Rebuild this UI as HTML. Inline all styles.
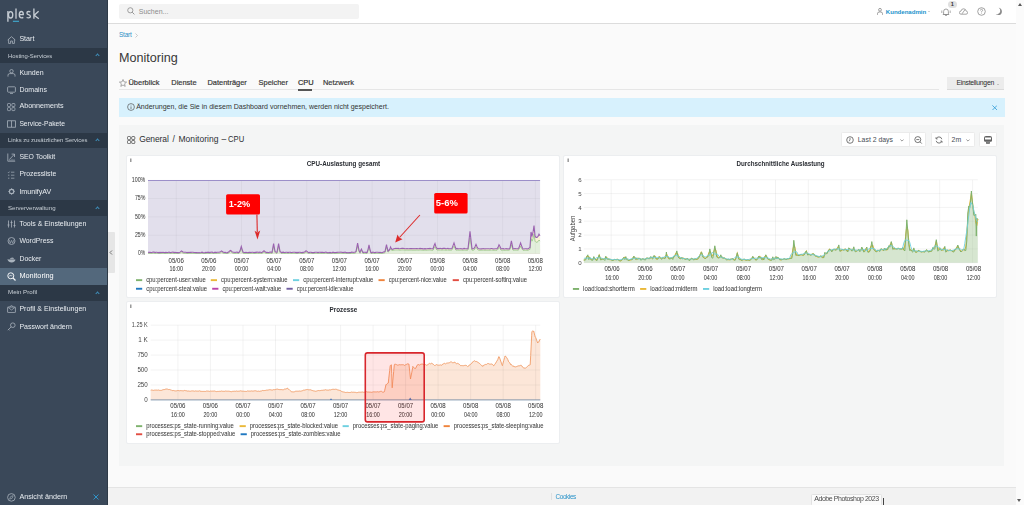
<!DOCTYPE html>
<html><head><meta charset="utf-8">
<style>
*{box-sizing:border-box;margin:0;padding:0}
html,body{width:1024px;height:505px;overflow:hidden;background:#fafafa;font-family:"Liberation Sans",sans-serif;position:relative}
.a{position:absolute;white-space:nowrap}
#sb{position:absolute;left:0;top:0;width:108px;height:505px;background:#3a4859;will-change:transform}
#sb .t{position:absolute;left:19.4px;color:#e9edf1;font-size:7.05px;line-height:8px;margin-top:0.6px}
#sb .band{position:absolute;left:0;width:107px;background:#2c3846}
#sb .band span{position:absolute;left:8px;top:4px;color:#c9d0d7;font-size:6.2px;line-height:8px}
#sb .band i{position:absolute;left:96.3px;top:6px;width:3px;height:3px;border-left:1px solid #3f8fbc;border-top:1px solid #3f8fbc;transform:rotate(45deg)}
#sb svg{position:absolute;left:7px}
#hdr{position:absolute;left:108px;top:0;width:908px;height:24px;background:#fff;border-bottom:1px solid #dcdcdc}
#scr{position:absolute;left:1016px;top:0;width:8px;height:505px;background:#fbfbfb}
.pnl{background:#fff;border:1px solid #eceef0;border-radius:2px}
.tab{position:absolute;top:79px;font-size:7.45px;line-height:8px;color:#3a3a3a;-webkit-text-stroke:0.2px #3a3a3a}
</style></head><body>

<div id="sb">
  <!-- logo -->
  <svg style="left:0;top:0" width="44" height="26" viewBox="0 0 44 26"><g fill="none" stroke="#c5ccd3" stroke-width="1.35">
   <path d="M7.9 11 V21.8"/><ellipse cx="10.6" cy="14.75" rx="2.15" ry="3.2"/>
   <path d="M16 8.6 V18.7"/>
   <path d="M19.4 14.6 H23.3 Q23.3 11.5 21.3 11.5 Q19.3 11.5 19.3 14.75 Q19.3 17.9 21.5 17.9 Q22.6 17.9 23.3 17.4"/>
   <path d="M30.3 11.8 Q29.6 11.5 28.6 11.5 Q26.9 11.5 26.9 12.9 Q26.9 14.1 28.6 14.7 Q30.4 15.3 30.4 16.5 Q30.4 17.9 28.5 17.9 Q27.4 17.9 26.6 17.5"/>
   <path d="M33.9 8.6 V18.7 M38.6 11.2 L34.2 15.2 L38.8 18.7"/>
  </g><rect x="12.9" y="20.7" width="6.1" height="1.3" fill="#3f9dc0"/></svg>
  <svg style="top:36px" width="9" height="8" viewBox="0 0 9 8"><path d="M0.7 4 L4.5 0.7 L8.3 4 M1.6 3.3 V7.4 H3.6 V5 H5.4 V7.4 H7.4 V3.3" fill="none" stroke="#a9b3bd" stroke-width="0.8"/></svg>
  <div class="t" style="top:34.8px;font-size:7.1px">Start</div>

  <div class="band" style="top:48px;height:14.7px"><span style="font-size:5.86px;top:3.8px">Hosting-Services</span><i style="top:6.1px"></i></div>

  <svg style="top:68.5px" width="9" height="8" viewBox="0 0 9 8"><circle cx="4.5" cy="2.2" r="1.7" fill="none" stroke="#a9b3bd" stroke-width="0.8"/><path d="M1 7.6 V6.2 Q1 4.6 2.8 4.6 H6.2 Q8 4.6 8 6.2 V7.6" fill="none" stroke="#a9b3bd" stroke-width="0.8"/></svg>
  <div class="t" style="top:68.1px;font-size:7.02px">Kunden</div>

  <svg style="top:85.5px" width="9" height="8" viewBox="0 0 9 8"><rect x="0.6" y="0.8" width="7.8" height="5.4" rx="0.8" fill="none" stroke="#a9b3bd" stroke-width="0.8"/><path d="M3 7.4 H6" stroke="#a9b3bd" stroke-width="0.8"/></svg>
  <div class="t" style="top:85.1px;font-size:6.99px">Domains</div>

  <svg style="top:102.6px" width="9" height="9" viewBox="0 0 9 9"><g fill="none" stroke="#a9b3bd" stroke-width="0.75"><rect x="0.5" y="0.5" width="3" height="3" rx="0.7"/><rect x="4.9" y="0.5" width="3" height="3" rx="0.7"/><rect x="0.5" y="4.6" width="3" height="3" rx="0.7"/><rect x="4.9" y="4.6" width="3" height="3" rx="0.7"/></g></svg>
  <div class="t" style="top:101.6px;font-size:7.16px">Abonnements</div>

  <svg style="top:120px" width="9" height="8" viewBox="0 0 9 8"><rect x="0.6" y="0.8" width="7.8" height="6.4" fill="none" stroke="#a9b3bd" stroke-width="0.8"/><path d="M4.5 0.8 V7.2" stroke="#a9b3bd" stroke-width="0.8"/></svg>
  <div class="t" style="top:119.9px;font-size:6.72px">Service-Pakete</div>

  <div class="band" style="top:133px;height:14.6px"><span style="font-size:5.86px;top:3.4px">Links zu zusätzlichen Services</span><i style="top:6.1px"></i></div>

  <svg style="top:152.5px" width="9" height="9" viewBox="0 0 9 9"><g fill="none" stroke="#a9b3bd" stroke-width="0.8"><path d="M0.8 0.5 V8.2 H8.2 M2.3 6.6 L7.4 1.2 M4.6 1.1 H7.5 V4"/><path d="M3 8 V6.6 M5 8 V5.8 M7 8 V6.2" stroke-width="0.6"/></g></svg>
  <div class="t" style="top:152.8px;font-size:6.86px">SEO Toolkit</div>

  <svg style="top:170.5px" width="9" height="9" viewBox="0 0 9 9"><g fill="none" stroke="#a9b3bd" stroke-width="0.7"><path d="M1 1.2 L1.6 1.8 L2.6 0.6 M4 1.2 H7.4 M1 4.2 H2.4 M4 4.2 H7.4 M1 7.2 H2.4 M4 7.2 H7.4"/></g></svg>
  <div class="t" style="top:169.8px;font-size:6.83px">Prozessliste</div>

  <svg style="top:188px" width="9" height="8" viewBox="0 0 9 8"><circle cx="4.6" cy="3.5" r="2.2" fill="none" stroke="#a9b3bd" stroke-width="1.2"/><g stroke="#a9b3bd" stroke-width="0.9"><path d="M4.6 0.3 V1 M4.6 6 V6.7 M1.4 3.5 H2.1 M7.1 3.5 H7.8 M2.3 1.2 L2.8 1.7 M6.4 5.3 L6.9 5.8 M6.9 1.2 L6.4 1.7 M2.8 5.3 L2.3 5.8"/></g></svg>
  <div class="t" style="top:187.3px;font-size:7.11px">ImunifyAV</div>

  <div class="band" style="top:199.7px;height:16.1px"><span style="font-size:6.12px;top:4.4px">Serververwaltung</span><i style="top:6.9px"></i></div>

  <svg style="top:220px" width="9" height="8" viewBox="0 0 9 8"><path d="M1.5 0.5 V7.5 M4.5 0.5 V7.5 M7.5 0.5 V7.5 M0.5 5 H2.5 M3.5 2.5 H5.5 M6.5 5.5 H8.5" fill="none" stroke="#a9b3bd" stroke-width="0.8"/></svg>
  <div class="t" style="top:219.6px;font-size:7.0px">Tools &amp; Einstellungen</div>

  <svg style="top:237px" width="9" height="8" viewBox="0 0 9 8"><circle cx="4.5" cy="4" r="3.5" fill="none" stroke="#a9b3bd" stroke-width="0.8"/><path d="M2 2.5 L3.3 6.2 L4.5 3.3 L5.7 6.2 L7 2.5" fill="none" stroke="#a9b3bd" stroke-width="0.6"/></svg>
  <div class="t" style="top:236.4px;font-size:6.92px">WordPress</div>

  <svg style="top:255.5px" width="9" height="7" viewBox="0 0 9 7"><path d="M0.4 3.4 Q1.2 3.1 1.6 3.6 H8.4 Q8.2 6.4 4.6 6.4 Q1.6 6.4 0.4 3.4 Z" fill="#a9b3bd"/><path d="M2.6 3.2 H7.2 L6.4 1.8 Q5 1.2 3.6 2 Z" fill="#a9b3bd" opacity="0.85"/></svg>
  <div class="t" style="top:254.4px;font-size:6.91px">Docker</div>

  <div class="a" style="left:0;top:267.5px;width:107px;height:17.3px;background:#53687c"></div>
  <svg style="top:272px" width="9" height="9" viewBox="0 0 9 9"><circle cx="3.8" cy="3.8" r="3" fill="none" stroke="#f3f5f7" stroke-width="1"/><path d="M6 6 L8.5 8.5" stroke="#f3f5f7" stroke-width="1.2"/><path d="M2.3 4.5 L3.2 3 L4.3 4.2 L5.3 2.8" fill="none" stroke="#f3f5f7" stroke-width="0.6"/></svg>
  <div class="t" style="top:271.4px;font-size:7.35px;color:#fff">Monitoring</div>

  <div class="band" style="top:284.8px;height:15.9px"><span style="font-size:6.18px;top:3.7px">Mein Profil</span><i style="top:6.8px"></i></div>

  <svg style="top:305px" width="9" height="8" viewBox="0 0 9 8"><rect x="0.6" y="2" width="7.8" height="5.6" rx="0.6" fill="none" stroke="#a9b3bd" stroke-width="0.8"/><path d="M0.8 2.2 L4.5 5 L8.2 2.2 M2.5 2 L4.5 0.5 L6.5 2" fill="none" stroke="#a9b3bd" stroke-width="0.7"/></svg>
  <div class="t" style="top:304.7px;font-size:7.04px">Profil &amp; Einstellungen</div>

  <svg style="top:322px" width="9" height="9" viewBox="0 0 9 9"><circle cx="5.8" cy="3.2" r="2.3" fill="none" stroke="#a9b3bd" stroke-width="0.8"/><path d="M4.2 4.8 L0.8 8.2 M1.6 7.4 L2.6 8.4" fill="none" stroke="#a9b3bd" stroke-width="0.8"/></svg>
  <div class="t" style="top:322.0px;font-size:7.0px">Passwort ändern</div>

  <svg style="top:492.5px" width="9" height="9" viewBox="0 0 9 9"><circle cx="4.4" cy="4.4" r="3.8" fill="none" stroke="#a9b3bd" stroke-width="0.8"/><path d="M6.2 2.6 L3.6 3.6 L2.6 6.2 L5.2 5.2 Z" fill="none" stroke="#a9b3bd" stroke-width="0.6"/></svg>
  <div class="t" style="top:492.1px;font-size:7.19px">Ansicht ändern</div>
  <svg style="left:93px;top:493.5px;position:absolute" width="6" height="6" viewBox="0 0 6 6"><path d="M0.5 0.5 L5.5 5.5 M5.5 0.5 L0.5 5.5" stroke="#2f9bd4" stroke-width="0.9"/></svg>
  <div class="a" style="left:107px;top:0;width:1px;height:505px;background:#2e3a47"></div>
</div>

<div id="hdr">
  <div class="a" style="left:11px;top:4px;width:240px;height:15px;background:#f3f3f3;border-radius:2px"></div>
  <svg class="a" style="left:19px;top:7px" width="8" height="8" viewBox="0 0 8 8"><circle cx="3.3" cy="3.3" r="2.6" fill="none" stroke="#8a8a8a" stroke-width="0.8"/><path d="M5.2 5.2 L7.4 7.4" stroke="#8a8a8a" stroke-width="0.9"/></svg>
  <div class="a" style="left:30.8px;top:7.9px;font-size:7px;line-height:8px;color:#8c8c8c">Suchen...</div>

  <svg class="a" style="left:769px;top:8px" width="6" height="7" viewBox="0 0 6 7"><circle cx="3" cy="1.8" r="1.4" fill="none" stroke="#777" stroke-width="0.7"/><path d="M0.5 6.8 V5.6 Q0.5 4 2.2 4 H3.8 Q5.5 4 5.5 5.6 V6.8" fill="none" stroke="#777" stroke-width="0.7"/></svg>
  <div class="a" style="left:777.8px;top:7.6px;font-size:6.1px;line-height:8px;color:#2293cc;font-weight:bold;letter-spacing:-0.02px">Kundenadmin</div>
  <div class="a" style="left:819.8px;top:11px;width:0;height:0;border-left:1.4px solid transparent;border-right:1.4px solid transparent;border-top:1.4px solid #a8a8a8"></div>

  <svg class="a" style="left:833px;top:7.5px" width="10" height="8" viewBox="0 0 10 8"><path d="M2.6 6.5 V3.6 Q2.6 1 5 1 Q7.4 1 7.4 3.6 V6.5 Z M1.8 6.5 H8.2 M4 7.4 H6" fill="none" stroke="#8a8a8a" stroke-width="0.8"/><path d="M0.8 2.5 V5 M9.2 2.5 V5" stroke="#8a8a8a" stroke-width="0.7"/></svg>
  <div class="a" style="left:840px;top:1px;width:8.8px;height:7.2px;border-radius:3.6px;background:#e0e0e0;font-size:5.6px;line-height:7.2px;text-align:center;color:#333;font-weight:bold">1</div>
  <svg class="a" style="left:851px;top:8px" width="9" height="7" viewBox="0 0 9 7"><path d="M2 6.2 Q0.4 6.2 0.4 4.6 Q0.4 3.1 2 3.1 Q2.3 0.8 4.6 0.8 Q6.7 0.8 7.1 3 Q8.6 3.2 8.6 4.7 Q8.6 6.2 7 6.2 Z M3 5.8 L6 1.6" fill="none" stroke="#8a8a8a" stroke-width="0.75"/></svg>
  <svg class="a" style="left:868.5px;top:7.2px" width="9" height="9" viewBox="0 0 9 9"><circle cx="4.5" cy="4.5" r="3.8" fill="none" stroke="#8a8a8a" stroke-width="0.8"/><path d="M3.4 3.5 Q3.4 2.3 4.5 2.3 Q5.6 2.3 5.6 3.4 Q5.6 4.2 4.5 4.6 V5.4" fill="none" stroke="#8a8a8a" stroke-width="0.7"/><circle cx="4.5" cy="6.6" r="0.45" fill="#8a8a8a"/></svg>
  <svg class="a" style="left:886.5px;top:7.2px" width="8" height="9" viewBox="0 0 8 9"><path d="M3.6 0.4 Q6.9 1.6 6.9 4.4 Q6.9 8 3.2 8 Q1.6 8 0.6 7.2 Q4.4 7.4 5.2 4.4 Q5.7 2 3.6 0.4 Z" fill="#8a8a8a"/></svg>
</div>

<!-- main content -->
<div class="a" style="left:119px;top:31.6px;font-size:6.4px;line-height:6.4px;color:#2a90c6;letter-spacing:-0.18px">Start</div>
<svg class="a" style="left:135px;top:32.5px" width="3" height="5" viewBox="0 0 3 5"><path d="M0.5 0.5 L2.5 2.5 L0.5 4.5" fill="none" stroke="#aaa" stroke-width="0.6"/></svg>
<div class="a" style="left:119px;top:50.5px;font-size:12.6px;line-height:14px;color:#383838">Monitoring</div>

<svg class="a" style="left:119px;top:79px" width="8" height="8" viewBox="0 0 8 8"><path d="M4 0.5 L5 2.9 L7.6 3.1 L5.6 4.8 L6.2 7.4 L4 6 L1.8 7.4 L2.4 4.8 L0.4 3.1 L3 2.9 Z" fill="none" stroke="#6a6a6a" stroke-width="0.55"/></svg>
<div class="tab" style="left:128.5px">Überblick</div>
<div class="tab" style="left:171.3px">Dienste</div>
<div class="tab" style="left:207.5px">Datenträger</div>
<div class="tab" style="left:258.6px">Speicher</div>
<div class="tab" style="left:298px;color:#222">CPU</div>
<div class="tab" style="left:323px">Netzwerk</div>
<div class="a" style="left:119px;top:89px;width:820px;height:1px;background:#e6e6e6"></div>
<div class="a" style="left:298px;top:89px;width:13.5px;height:1.6px;background:#555"></div>

<div class="a" style="left:947px;top:77px;width:57.3px;height:12.2px;background:#ececec;box-shadow:0 0.8px 0.3px #d0d0d0"></div>
<div class="a" style="left:956.5px;top:78.6px;font-size:6.8px;line-height:7px;color:#2b2b2b;letter-spacing:-0.26px">Einstellungen</div>
<div class="a" style="left:996.6px;top:83.5px;width:0;height:0;border-left:1.2px solid transparent;border-right:1.2px solid transparent;border-top:1.3px solid #999"></div>

<div class="a" style="left:119px;top:97.5px;width:885.5px;height:19.3px;background:#d7f1fd"></div>
<svg class="a" style="left:126.8px;top:103px" width="8" height="8" viewBox="0 0 8 8"><circle cx="4" cy="4" r="3.4" fill="none" stroke="#555" stroke-width="0.7"/><path d="M4 3.4 V6" stroke="#555" stroke-width="0.7"/><circle cx="4" cy="2.2" r="0.4" fill="#555"/></svg>
<div class="a" style="left:136.2px;top:102.5px;font-size:7.03px;line-height:8px;color:#333">Änderungen, die Sie in diesem Dashboard vornehmen, werden nicht gespeichert.</div>
<svg class="a" style="left:991.8px;top:104.8px" width="5.5" height="5.5" viewBox="0 0 5.5 5.5"><path d="M0.4 0.4 L5.1 5.1 M5.1 0.4 L0.4 5.1" stroke="#2d9bd6" stroke-width="0.8"/></svg>

<!-- handle -->
<div class="a" style="left:108px;top:231.5px;width:7px;height:41.5px;background:#e6e6e6;border-radius:0 1px 1px 0"></div>
<svg class="a" style="left:108.8px;top:250px" width="4" height="5" viewBox="0 0 4 5"><path d="M3 0.5 L1 2.5 L3 4.5" fill="none" stroke="#666" stroke-width="0.9"/></svg>

<!-- grafana -->
<div class="a" id="gf" style="left:119px;top:125px;width:885px;height:340.5px;background:#f4f5f5"></div>
<svg class="a" style="left:127px;top:136px" width="8.5" height="8" viewBox="0 0 8.5 8"><g fill="none" stroke="#505050" stroke-width="0.85"><rect x="0.5" y="0.5" width="3.1" height="3.1" rx="0.9"/><rect x="4.7" y="0.5" width="3.1" height="3.1" rx="0.9"/><rect x="0.5" y="4.5" width="3.1" height="3.1" rx="0.9"/><rect x="4.7" y="4.5" width="3.1" height="3.1" rx="0.9"/></g></svg>
<div class="a" style="left:139.2px;top:134.5px;font-size:8.5px;line-height:9px;color:#2d2f33;letter-spacing:-0.1px">General</div>
<div class="a" style="left:172.5px;top:134.5px;font-size:8.5px;line-height:9px;color:#2d2f33">/</div>
<div class="a" style="left:178.5px;top:134.5px;font-size:8.5px;line-height:9px;color:#2d2f33;letter-spacing:0.03px">Monitoring</div>
<div class="a" style="left:221.6px;top:134.5px;font-size:8.5px;line-height:9px;color:#2d2f33">–</div>
<div class="a" style="left:228.3px;top:134.5px;font-size:8.5px;line-height:9px;color:#2d2f33;transform:scaleX(0.9);transform-origin:0 0">CPU</div>

<div class="a" style="left:841.4px;top:132.2px;width:84.8px;height:15px;background:#fff;border:1px solid #ebebeb;border-radius:1.5px"></div>
<div class="a" style="left:909px;top:132.2px;width:1px;height:15px;background:#ebebeb"></div>
<svg class="a" style="left:845.6px;top:136px" width="8" height="8" viewBox="0 0 8 8"><circle cx="4" cy="4" r="3.3" fill="none" stroke="#555" stroke-width="0.8"/><path d="M4 1.9 V4.2 L2.8 5.2" fill="none" stroke="#555" stroke-width="0.7"/></svg>
<div class="a" style="left:857.8px;top:135.8px;font-size:6.88px;line-height:8px;color:#464c54">Last 2 days</div>
<svg class="a" style="left:900px;top:139px" width="4" height="3" viewBox="0 0 4 3"><path d="M0.4 0.5 L2 2.1 L3.6 0.5" fill="none" stroke="#555" stroke-width="0.6"/></svg>
<svg class="a" style="left:913.8px;top:136px" width="9" height="8" viewBox="0 0 9 8"><circle cx="3.8" cy="3.6" r="3" fill="none" stroke="#555" stroke-width="0.8"/><path d="M2.3 3.6 H5.3 M6 5.8 L7.8 7.6" stroke="#555" stroke-width="0.8"/></svg>

<div class="a" style="left:930.8px;top:132.2px;width:44.6px;height:15px;background:#fff;border:1px solid #ebebeb;border-radius:1.5px"></div>
<div class="a" style="left:947.5px;top:132.2px;width:1px;height:15px;background:#ebebeb"></div>
<svg class="a" style="left:935.2px;top:135.8px" width="8" height="8" viewBox="0 0 8 8"><path d="M6.8 3.2 Q6.4 0.9 4 0.9 Q2 0.9 1.3 2.6 M1.2 4.8 Q1.6 7.1 4 7.1 Q6 7.1 6.7 5.4" fill="none" stroke="#555" stroke-width="0.8"/><path d="M1 1.2 V2.9 H2.7 M7 6.8 V5.1 H5.3" fill="none" stroke="#555" stroke-width="0.7"/></svg>
<div class="a" style="left:951.6px;top:135.8px;font-size:6.88px;line-height:8px;color:#464c54">2m</div>
<svg class="a" style="left:965.7px;top:139px" width="4" height="3" viewBox="0 0 4 3"><path d="M0.4 0.5 L2 2.1 L3.6 0.5" fill="none" stroke="#555" stroke-width="0.6"/></svg>

<div class="a" style="left:979.4px;top:132.2px;width:17.4px;height:15px;background:#fff;border:1px solid #ebebeb;border-radius:1.5px"></div>
<svg class="a" style="left:983.9px;top:136.1px" width="8" height="8" viewBox="0 0 8 8"><path d="M0 2 Q0 0 2 0 H6 Q8 0 8 2 V4.6 Q8 5.8 6.8 5.8 H1.2 Q0 5.8 0 4.6 Z M1 1.6 V3.6 H7 V1.6 Z" fill="#626262" fill-rule="evenodd"/><path d="M2 5.8 H6 L5.6 8 H2.4 Z" fill="#626262"/><path d="M4 6 V8" stroke="#fff" stroke-width="0.4"/></svg>

<!-- panels -->
<div class="a pnl" style="left:126.3px;top:155.1px;width:433.4px;height:142.6px"></div>
<div class="a pnl" style="left:563.2px;top:155.1px;width:434.3px;height:142.6px"></div>
<div class="a pnl" style="left:126.3px;top:301.4px;width:433.4px;height:142.2px"></div>

<!--CHARTS--><svg class="a" style="left:0;top:0" width="1024" height="505" viewBox="0 0 1024 505" font-family="Liberation Sans, sans-serif">
<rect x="148.0" y="180.3" width="392.1" height="73.2" fill="#e2dfec"/>
<path d="M148 252.2 L149 252.4 L150 252.3 L151 252.5 L152 252.5 L153 252.1 L154 252.1 L155 252.6 L156 252.3 L157 252.2 L158 252.7 L159 252.4 L160 252.6 L161 252.4 L162 252.5 L163 252.2 L164 252.5 L165 252.6 L166 252.4 L167 252.5 L168 252.5 L169 252.1 L170 252.6 L171 252.5 L172 252.3 L173 252.1 L174 252.6 L175 252.4 L176 252.5 L177 252.6 L178 252.5 L179 252.7 L180 252.1 L181 251.4 L181.6 251 L182 251.3 L183 252 L184 252.2 L185 252.2 L186 252.2 L187 252.7 L188 252.4 L189 252.5 L190 252.3 L191 252.4 L192 252.3 L193 252.3 L194 252.5 L195 252.5 L196 252.6 L197 252.5 L198 252.7 L199 252.6 L200 252.7 L201 252.5 L202 252.2 L203 252.6 L204 252.7 L205 252.6 L206 252.4 L207 252.5 L208 252.2 L209 252.6 L210 252.4 L211 252.3 L212 252.1 L213 252.6 L214 252.7 L215 252.2 L216 252.6 L217 252.3 L218 252.2 L219 252.3 L220 252.1 L221 251.4 L221.6 251 L222 251.3 L223 252 L224 252.5 L225 252.3 L226 252.6 L227 252.7 L228 252.4 L229 251.6 L230 250.8 L230.5 250.4 L231 250.8 L232 251.6 L233 252.2 L234 252.3 L235 252.5 L236 252.2 L237 252.1 L238 252.6 L239 252.3 L240 250.8 L241 247.5 L241.3 246.5 L242 248.8 L243 252.1 L244 252.5 L245 252.5 L246 252.4 L247 252.5 L248 252.7 L249 252.4 L250 252.4 L251 252.5 L252 252.2 L253 252.3 L254 252.7 L255 252.4 L256 252.4 L257 252.1 L258 252.3 L259 252.4 L260 252.1 L261 252.5 L262 252.5 L263 251.6 L264 250.8 L265 251.6 L266 252.5 L267 252.3 L268 252.5 L269 252.5 L270 252.1 L271 252.1 L272 252.5 L273 246.9 L273.6 243.6 L274 245.8 L275 251.3 L276 252.3 L277 252.3 L278 246.9 L278.6 243.6 L279 245.8 L280 251.3 L281 252.3 L282 252.6 L283 252.1 L284 252.4 L285 252.5 L286 252.3 L287 252.2 L288 252.6 L289 252.2 L290 252.2 L291 252.4 L292 252.5 L293 252.2 L294 252.3 L295 252.3 L296 252.6 L297 252.4 L298 252.6 L299 252.2 L300 252.3 L301 252.5 L302 252.6 L303 252.4 L304 252.2 L305 251.8 L306 250.8 L307 251.4 L308 252.2 L309 252.6 L310 252.2 L311 252.3 L312 252.6 L313 252.5 L314 252.6 L315 252.3 L316 252.2 L317 252.3 L318 252.6 L319 252.3 L320 252.3 L321 252.4 L322 252.4 L323 252.3 L324 252.7 L325 252.2 L326 252.1 L327 252.7 L328 252.6 L329 252.7 L330 252.4 L331 252.7 L332 252.7 L333 252.2 L334 252.5 L335 252.6 L336 252.5 L337 252.4 L338 252.3 L339 252.3 L340 252.2 L341 252.1 L342 252.5 L343 252.3 L344 252.6 L345 252.1 L346 252.6 L347 252.5 L348 252.7 L349 252.6 L350 252.6 L351 252.4 L352 252.1 L353 252.5 L354 252.2 L355 252.3 L356 251.4 L357 246.3 L357.6 243.2 L358 245.2 L359 250.4 L360 252.2 L361 249.9 L361.4 249 L362 250.4 L363 252.6 L364 252.3 L365 252.2 L366 252.4 L367 252.6 L368 249.6 L369 244.8 L370 249.6 L371 252.6 L372 252.6 L373 252.1 L374 252.5 L375 252.6 L376 252.2 L377 252.3 L378 252.3 L379 252.5 L380 252.4 L381 252.5 L382 252.7 L383 252.2 L384 251.9 L385 251.6 L386 246.9 L386.5 244.5 L387 246.9 L388 251 L389 250.3 L390 248.4 L390.6 247 L391 248 L392 249.3 L393 249.1 L394 248.7 L395 248.5 L396 248.4 L397 248.5 L398 248.4 L399 248.6 L400 248.7 L401 248.5 L402 248.4 L403 248.4 L404 248.5 L405 248.7 L406 248.8 L407 248.5 L408 248.8 L409 248.7 L410 248.6 L411 248.5 L412 248.6 L413 248.8 L414 248.6 L415 248.7 L416 248.6 L417 248.5 L418 248.7 L419 248.8 L420 248.4 L421 248.6 L422 248.6 L423 248.9 L424 248.9 L425 248.6 L426 248.9 L427 248.8 L428 248.5 L429 248.6 L430 248.4 L431 248.8 L432 248.8 L433 248.9 L434 245.8 L435 243.5 L436 246.9 L437 248.7 L438 248.4 L439 248.7 L440 248.4 L441 248.5 L442 248.8 L443 248.4 L444 248.4 L445 248.4 L446 248.9 L447 248.5 L448 248.4 L449 248.9 L450 248.5 L451 248.9 L452 248.4 L453 245.6 L454 243 L455 246.1 L456 248.9 L457 248.4 L458 248.9 L459 248.7 L460 248.8 L461 248.5 L462 248.9 L463 249 L464 248.4 L465 248.6 L466 248.7 L467 248.9 L468 248.6 L469 240 L470 231.3 L471 240 L472 248.9 L473 248.7 L474 248.6 L475 246.8 L476 244.5 L477 246.8 L478 248.5 L479 248.7 L480 249 L481 248.7 L482 248.9 L483 248.5 L484 248.8 L485 248.9 L486 248.8 L487 248.7 L488 248.7 L489 248.8 L490 249 L491 248.5 L492 248.5 L493 248.9 L494 249 L495 248.8 L496 248.7 L497 248.9 L498 247.4 L499 244.8 L500 246.6 L501 248.8 L502 248.7 L503 248.6 L504 248.9 L505 249 L506 248.6 L507 248.9 L508 248.7 L509 249 L510 247.8 L511 242.8 L511.4 240.8 L512 243.8 L513 248.8 L514 248.7 L515 248.6 L516 248.7 L517 248.7 L518 248.9 L519 247.6 L520 244.7 L520.6 243 L521 244.2 L522 247.1 L523 249 L524 249 L525 248.8 L526 248.8 L527 248.9 L528 249 L529 248.1 L530 247.6 L531 232 L532 236 L533 232.5 L534 225.5 L535 236 L536 237.4 L537 237.4 L538 236.5 L539 234.2 L540 235.7 L540.1 253.5 L148.0 253.5 Z" fill="#f8f2d6"/>
<path d="M148 253.3 L149 253.5 L150 253.4 L151 253.5 L152 253.5 L153 253.2 L154 253.2 L155 253.5 L156 253.4 L157 253.3 L158 253.5 L159 253.5 L160 253.5 L161 253.5 L162 253.5 L163 253.3 L164 253.5 L165 253.5 L166 253.5 L167 253.5 L168 253.5 L169 253.2 L170 253.5 L171 253.5 L172 253.4 L173 253.2 L174 253.5 L175 253.5 L176 253.5 L177 253.5 L178 253.5 L179 253.5 L180 253.2 L181 252.5 L181.6 252.1 L182 252.4 L183 253.1 L184 253.3 L185 253.3 L186 253.3 L187 253.5 L188 253.5 L189 253.5 L190 253.4 L191 253.5 L192 253.4 L193 253.4 L194 253.5 L195 253.5 L196 253.5 L197 253.5 L198 253.5 L199 253.5 L200 253.5 L201 253.5 L202 253.3 L203 253.5 L204 253.5 L205 253.5 L206 253.5 L207 253.5 L208 253.3 L209 253.5 L210 253.5 L211 253.4 L212 253.2 L213 253.5 L214 253.5 L215 253.3 L216 253.5 L217 253.4 L218 253.3 L219 253.4 L220 253.2 L221 252.5 L221.6 252.1 L222 252.4 L223 253.1 L224 253.5 L225 253.4 L226 253.5 L227 253.5 L228 253.5 L229 252.7 L230 251.9 L230.5 251.5 L231 251.9 L232 252.7 L233 253.3 L234 253.4 L235 253.5 L236 253.3 L237 253.2 L238 253.5 L239 253.4 L240 251.9 L241 249.3 L241.3 248.6 L242 250.2 L243 253.2 L244 253.5 L245 253.5 L246 253.5 L247 253.5 L248 253.5 L249 253.5 L250 253.5 L251 253.5 L252 253.3 L253 253.4 L254 253.5 L255 253.5 L256 253.5 L257 253.2 L258 253.4 L259 253.5 L260 253.2 L261 253.5 L262 253.5 L263 252.7 L264 251.9 L265 252.7 L266 253.5 L267 253.4 L268 253.5 L269 253.5 L270 253.2 L271 253.2 L272 253.5 L273 248.9 L273.6 246.6 L274 248.1 L275 252.4 L276 253.4 L277 253.4 L278 248.9 L278.6 246.6 L279 248.1 L280 252.4 L281 253.4 L282 253.5 L283 253.2 L284 253.5 L285 253.5 L286 253.4 L287 253.3 L288 253.5 L289 253.3 L290 253.3 L291 253.5 L292 253.5 L293 253.3 L294 253.4 L295 253.4 L296 253.5 L297 253.5 L298 253.5 L299 253.3 L300 253.4 L301 253.5 L302 253.5 L303 253.5 L304 253.3 L305 252.9 L306 251.9 L307 252.5 L308 253.3 L309 253.5 L310 253.3 L311 253.4 L312 253.5 L313 253.5 L314 253.5 L315 253.4 L316 253.3 L317 253.4 L318 253.5 L319 253.4 L320 253.4 L321 253.5 L322 253.5 L323 253.4 L324 253.5 L325 253.3 L326 253.2 L327 253.5 L328 253.5 L329 253.5 L330 253.5 L331 253.5 L332 253.5 L333 253.3 L334 253.5 L335 253.5 L336 253.5 L337 253.5 L338 253.4 L339 253.4 L340 253.3 L341 253.2 L342 253.5 L343 253.4 L344 253.5 L345 253.2 L346 253.5 L347 253.5 L348 253.5 L349 253.5 L350 253.5 L351 253.5 L352 253.2 L353 253.5 L354 253.3 L355 253.4 L356 252.5 L357 248.4 L357.6 246.3 L358 247.7 L359 251.5 L360 253.3 L361 251 L361.4 250.3 L362 251.5 L363 253.5 L364 253.4 L365 253.3 L366 253.5 L367 253.5 L368 250.7 L369 247.4 L370 250.7 L371 253.5 L372 253.5 L373 253.2 L374 253.5 L375 253.5 L376 253.3 L377 253.4 L378 253.4 L379 253.5 L380 253.5 L381 253.5 L382 253.5 L383 253.3 L384 253 L385 252.7 L386 248.9 L386.5 247.2 L387 248.9 L388 252.1 L389 251.4 L390 250 L390.6 248.9 L391 249.6 L392 250.5 L393 250.4 L394 250.1 L395 250 L396 249.9 L397 250 L398 249.9 L399 250.1 L400 250.2 L401 250 L402 249.9 L403 249.9 L404 250 L405 250.1 L406 250.2 L407 250 L408 250.2 L409 250.1 L410 250.1 L411 250 L412 250.1 L413 250.2 L414 250.1 L415 250.2 L416 250.1 L417 250 L418 250.1 L419 250.2 L420 249.9 L421 250.1 L422 250.1 L423 250.3 L424 250.3 L425 250 L426 250.3 L427 250.2 L428 250 L429 250.1 L430 249.9 L431 250.2 L432 250.2 L433 250.3 L434 248.1 L435 246.5 L436 248.9 L437 250.1 L438 249.9 L439 250.2 L440 249.9 L441 250 L442 250.2 L443 249.9 L444 250 L445 250 L446 250.3 L447 250 L448 249.9 L449 250.3 L450 250 L451 250.3 L452 249.9 L453 247.9 L454 246.2 L455 248.3 L456 250.3 L457 249.9 L458 250.2 L459 250.1 L460 250.2 L461 250 L462 250.2 L463 250.3 L464 250 L465 250.1 L466 250.2 L467 250.3 L468 250 L469 244.1 L470 238 L471 244.1 L472 250.3 L473 250.1 L474 250.1 L475 248.8 L476 247.2 L477 248.8 L478 250 L479 250.2 L480 250.4 L481 250.1 L482 250.3 L483 250 L484 250.2 L485 250.3 L486 250.2 L487 250.2 L488 250.2 L489 250.2 L490 250.3 L491 250 L492 250 L493 250.3 L494 250.3 L495 250.2 L496 250.2 L497 250.3 L498 249.3 L499 247.4 L500 248.6 L501 250.2 L502 250.1 L503 250.1 L504 250.3 L505 250.4 L506 250.1 L507 250.3 L508 250.2 L509 250.3 L510 249.5 L511 246 L511.4 244.6 L512 246.7 L513 250.2 L514 250.1 L515 250.1 L516 250.1 L517 250.1 L518 250.3 L519 249.4 L520 247.4 L520.6 246.2 L521 247 L522 249 L523 250.3 L524 250.3 L525 250.2 L526 250.2 L527 250.3 L528 250.4 L529 249.7 L530 249.4 L531 238.4 L532 241.2 L533 238.8 L534 233.9 L535 241.2 L536 242.2 L537 242.2 L538 241.6 L539 240 L540 241.1 L540.1 253.5 L148.0 253.5 Z" fill="#e3efdc"/>
<line x1="148.0" y1="180.3" x2="540.1" y2="180.3" stroke="#000" stroke-opacity="0.05" stroke-width="0.7"/>
<line x1="148.0" y1="198.6" x2="540.1" y2="198.6" stroke="#000" stroke-opacity="0.05" stroke-width="0.7"/>
<line x1="148.0" y1="216.9" x2="540.1" y2="216.9" stroke="#000" stroke-opacity="0.05" stroke-width="0.7"/>
<line x1="148.0" y1="235.2" x2="540.1" y2="235.2" stroke="#000" stroke-opacity="0.05" stroke-width="0.7"/>
<line x1="148.0" y1="253.5" x2="540.1" y2="253.5" stroke="#000" stroke-opacity="0.05" stroke-width="0.7"/>
<line x1="176.2" y1="180.3" x2="176.2" y2="253.5" stroke="#000" stroke-opacity="0.05" stroke-width="0.7"/>
<line x1="208.8" y1="180.3" x2="208.8" y2="253.5" stroke="#000" stroke-opacity="0.05" stroke-width="0.7"/>
<line x1="241.5" y1="180.3" x2="241.5" y2="253.5" stroke="#000" stroke-opacity="0.05" stroke-width="0.7"/>
<line x1="274.1" y1="180.3" x2="274.1" y2="253.5" stroke="#000" stroke-opacity="0.05" stroke-width="0.7"/>
<line x1="306.8" y1="180.3" x2="306.8" y2="253.5" stroke="#000" stroke-opacity="0.05" stroke-width="0.7"/>
<line x1="339.4" y1="180.3" x2="339.4" y2="253.5" stroke="#000" stroke-opacity="0.05" stroke-width="0.7"/>
<line x1="372.1" y1="180.3" x2="372.1" y2="253.5" stroke="#000" stroke-opacity="0.05" stroke-width="0.7"/>
<line x1="404.8" y1="180.3" x2="404.8" y2="253.5" stroke="#000" stroke-opacity="0.05" stroke-width="0.7"/>
<line x1="437.4" y1="180.3" x2="437.4" y2="253.5" stroke="#000" stroke-opacity="0.05" stroke-width="0.7"/>
<line x1="470" y1="180.3" x2="470" y2="253.5" stroke="#000" stroke-opacity="0.05" stroke-width="0.7"/>
<line x1="502.7" y1="180.3" x2="502.7" y2="253.5" stroke="#000" stroke-opacity="0.05" stroke-width="0.7"/>
<line x1="535.3" y1="180.3" x2="535.3" y2="253.5" stroke="#000" stroke-opacity="0.05" stroke-width="0.7"/>
<line x1="148.0" y1="180.5" x2="540.1" y2="180.5" stroke="#9487c6" stroke-width="0.9"/>
<path d="M148 253.3 L149 253.5 L150 253.4 L151 253.5 L152 253.5 L153 253.2 L154 253.2 L155 253.5 L156 253.4 L157 253.3 L158 253.5 L159 253.5 L160 253.5 L161 253.5 L162 253.5 L163 253.3 L164 253.5 L165 253.5 L166 253.5 L167 253.5 L168 253.5 L169 253.2 L170 253.5 L171 253.5 L172 253.4 L173 253.2 L174 253.5 L175 253.5 L176 253.5 L177 253.5 L178 253.5 L179 253.5 L180 253.2 L181 252.5 L181.6 252.1 L182 252.4 L183 253.1 L184 253.3 L185 253.3 L186 253.3 L187 253.5 L188 253.5 L189 253.5 L190 253.4 L191 253.5 L192 253.4 L193 253.4 L194 253.5 L195 253.5 L196 253.5 L197 253.5 L198 253.5 L199 253.5 L200 253.5 L201 253.5 L202 253.3 L203 253.5 L204 253.5 L205 253.5 L206 253.5 L207 253.5 L208 253.3 L209 253.5 L210 253.5 L211 253.4 L212 253.2 L213 253.5 L214 253.5 L215 253.3 L216 253.5 L217 253.4 L218 253.3 L219 253.4 L220 253.2 L221 252.5 L221.6 252.1 L222 252.4 L223 253.1 L224 253.5 L225 253.4 L226 253.5 L227 253.5 L228 253.5 L229 252.7 L230 251.9 L230.5 251.5 L231 251.9 L232 252.7 L233 253.3 L234 253.4 L235 253.5 L236 253.3 L237 253.2 L238 253.5 L239 253.4 L240 251.9 L241 249.3 L241.3 248.6 L242 250.2 L243 253.2 L244 253.5 L245 253.5 L246 253.5 L247 253.5 L248 253.5 L249 253.5 L250 253.5 L251 253.5 L252 253.3 L253 253.4 L254 253.5 L255 253.5 L256 253.5 L257 253.2 L258 253.4 L259 253.5 L260 253.2 L261 253.5 L262 253.5 L263 252.7 L264 251.9 L265 252.7 L266 253.5 L267 253.4 L268 253.5 L269 253.5 L270 253.2 L271 253.2 L272 253.5 L273 248.9 L273.6 246.6 L274 248.1 L275 252.4 L276 253.4 L277 253.4 L278 248.9 L278.6 246.6 L279 248.1 L280 252.4 L281 253.4 L282 253.5 L283 253.2 L284 253.5 L285 253.5 L286 253.4 L287 253.3 L288 253.5 L289 253.3 L290 253.3 L291 253.5 L292 253.5 L293 253.3 L294 253.4 L295 253.4 L296 253.5 L297 253.5 L298 253.5 L299 253.3 L300 253.4 L301 253.5 L302 253.5 L303 253.5 L304 253.3 L305 252.9 L306 251.9 L307 252.5 L308 253.3 L309 253.5 L310 253.3 L311 253.4 L312 253.5 L313 253.5 L314 253.5 L315 253.4 L316 253.3 L317 253.4 L318 253.5 L319 253.4 L320 253.4 L321 253.5 L322 253.5 L323 253.4 L324 253.5 L325 253.3 L326 253.2 L327 253.5 L328 253.5 L329 253.5 L330 253.5 L331 253.5 L332 253.5 L333 253.3 L334 253.5 L335 253.5 L336 253.5 L337 253.5 L338 253.4 L339 253.4 L340 253.3 L341 253.2 L342 253.5 L343 253.4 L344 253.5 L345 253.2 L346 253.5 L347 253.5 L348 253.5 L349 253.5 L350 253.5 L351 253.5 L352 253.2 L353 253.5 L354 253.3 L355 253.4 L356 252.5 L357 248.4 L357.6 246.3 L358 247.7 L359 251.5 L360 253.3 L361 251 L361.4 250.3 L362 251.5 L363 253.5 L364 253.4 L365 253.3 L366 253.5 L367 253.5 L368 250.7 L369 247.4 L370 250.7 L371 253.5 L372 253.5 L373 253.2 L374 253.5 L375 253.5 L376 253.3 L377 253.4 L378 253.4 L379 253.5 L380 253.5 L381 253.5 L382 253.5 L383 253.3 L384 253 L385 252.7 L386 248.9 L386.5 247.2 L387 248.9 L388 252.1 L389 251.4 L390 250 L390.6 248.9 L391 249.6 L392 250.5 L393 250.4 L394 250.1 L395 250 L396 249.9 L397 250 L398 249.9 L399 250.1 L400 250.2 L401 250 L402 249.9 L403 249.9 L404 250 L405 250.1 L406 250.2 L407 250 L408 250.2 L409 250.1 L410 250.1 L411 250 L412 250.1 L413 250.2 L414 250.1 L415 250.2 L416 250.1 L417 250 L418 250.1 L419 250.2 L420 249.9 L421 250.1 L422 250.1 L423 250.3 L424 250.3 L425 250 L426 250.3 L427 250.2 L428 250 L429 250.1 L430 249.9 L431 250.2 L432 250.2 L433 250.3 L434 248.1 L435 246.5 L436 248.9 L437 250.1 L438 249.9 L439 250.2 L440 249.9 L441 250 L442 250.2 L443 249.9 L444 250 L445 250 L446 250.3 L447 250 L448 249.9 L449 250.3 L450 250 L451 250.3 L452 249.9 L453 247.9 L454 246.2 L455 248.3 L456 250.3 L457 249.9 L458 250.2 L459 250.1 L460 250.2 L461 250 L462 250.2 L463 250.3 L464 250 L465 250.1 L466 250.2 L467 250.3 L468 250 L469 244.1 L470 238 L471 244.1 L472 250.3 L473 250.1 L474 250.1 L475 248.8 L476 247.2 L477 248.8 L478 250 L479 250.2 L480 250.4 L481 250.1 L482 250.3 L483 250 L484 250.2 L485 250.3 L486 250.2 L487 250.2 L488 250.2 L489 250.2 L490 250.3 L491 250 L492 250 L493 250.3 L494 250.3 L495 250.2 L496 250.2 L497 250.3 L498 249.3 L499 247.4 L500 248.6 L501 250.2 L502 250.1 L503 250.1 L504 250.3 L505 250.4 L506 250.1 L507 250.3 L508 250.2 L509 250.3 L510 249.5 L511 246 L511.4 244.6 L512 246.7 L513 250.2 L514 250.1 L515 250.1 L516 250.1 L517 250.1 L518 250.3 L519 249.4 L520 247.4 L520.6 246.2 L521 247 L522 249 L523 250.3 L524 250.3 L525 250.2 L526 250.2 L527 250.3 L528 250.4 L529 249.7 L530 249.4 L531 238.4 L532 241.2 L533 238.8 L534 233.9 L535 241.2 L536 242.2 L537 242.2 L538 241.6 L539 240 L540 241.1" fill="none" stroke="#8cc07c" stroke-width="0.7"/>
<path d="M148 252.2 L149 252.4 L150 252.3 L151 252.5 L152 252.5 L153 252.1 L154 252.1 L155 252.6 L156 252.3 L157 252.2 L158 252.7 L159 252.4 L160 252.6 L161 252.4 L162 252.5 L163 252.2 L164 252.5 L165 252.6 L166 252.4 L167 252.5 L168 252.5 L169 252.1 L170 252.6 L171 252.5 L172 252.3 L173 252.1 L174 252.6 L175 252.4 L176 252.5 L177 252.6 L178 252.5 L179 252.7 L180 252.1 L181 251.4 L181.6 251 L182 251.3 L183 252 L184 252.2 L185 252.2 L186 252.2 L187 252.7 L188 252.4 L189 252.5 L190 252.3 L191 252.4 L192 252.3 L193 252.3 L194 252.5 L195 252.5 L196 252.6 L197 252.5 L198 252.7 L199 252.6 L200 252.7 L201 252.5 L202 252.2 L203 252.6 L204 252.7 L205 252.6 L206 252.4 L207 252.5 L208 252.2 L209 252.6 L210 252.4 L211 252.3 L212 252.1 L213 252.6 L214 252.7 L215 252.2 L216 252.6 L217 252.3 L218 252.2 L219 252.3 L220 252.1 L221 251.4 L221.6 251 L222 251.3 L223 252 L224 252.5 L225 252.3 L226 252.6 L227 252.7 L228 252.4 L229 251.6 L230 250.8 L230.5 250.4 L231 250.8 L232 251.6 L233 252.2 L234 252.3 L235 252.5 L236 252.2 L237 252.1 L238 252.6 L239 252.3 L240 250.8 L241 247.5 L241.3 246.5 L242 248.8 L243 252.1 L244 252.5 L245 252.5 L246 252.4 L247 252.5 L248 252.7 L249 252.4 L250 252.4 L251 252.5 L252 252.2 L253 252.3 L254 252.7 L255 252.4 L256 252.4 L257 252.1 L258 252.3 L259 252.4 L260 252.1 L261 252.5 L262 252.5 L263 251.6 L264 250.8 L265 251.6 L266 252.5 L267 252.3 L268 252.5 L269 252.5 L270 252.1 L271 252.1 L272 252.5 L273 246.9 L273.6 243.6 L274 245.8 L275 251.3 L276 252.3 L277 252.3 L278 246.9 L278.6 243.6 L279 245.8 L280 251.3 L281 252.3 L282 252.6 L283 252.1 L284 252.4 L285 252.5 L286 252.3 L287 252.2 L288 252.6 L289 252.2 L290 252.2 L291 252.4 L292 252.5 L293 252.2 L294 252.3 L295 252.3 L296 252.6 L297 252.4 L298 252.6 L299 252.2 L300 252.3 L301 252.5 L302 252.6 L303 252.4 L304 252.2 L305 251.8 L306 250.8 L307 251.4 L308 252.2 L309 252.6 L310 252.2 L311 252.3 L312 252.6 L313 252.5 L314 252.6 L315 252.3 L316 252.2 L317 252.3 L318 252.6 L319 252.3 L320 252.3 L321 252.4 L322 252.4 L323 252.3 L324 252.7 L325 252.2 L326 252.1 L327 252.7 L328 252.6 L329 252.7 L330 252.4 L331 252.7 L332 252.7 L333 252.2 L334 252.5 L335 252.6 L336 252.5 L337 252.4 L338 252.3 L339 252.3 L340 252.2 L341 252.1 L342 252.5 L343 252.3 L344 252.6 L345 252.1 L346 252.6 L347 252.5 L348 252.7 L349 252.6 L350 252.6 L351 252.4 L352 252.1 L353 252.5 L354 252.2 L355 252.3 L356 251.4 L357 246.3 L357.6 243.2 L358 245.2 L359 250.4 L360 252.2 L361 249.9 L361.4 249 L362 250.4 L363 252.6 L364 252.3 L365 252.2 L366 252.4 L367 252.6 L368 249.6 L369 244.8 L370 249.6 L371 252.6 L372 252.6 L373 252.1 L374 252.5 L375 252.6 L376 252.2 L377 252.3 L378 252.3 L379 252.5 L380 252.4 L381 252.5 L382 252.7 L383 252.2 L384 251.9 L385 251.6 L386 246.9 L386.5 244.5 L387 246.9 L388 251 L389 250.3 L390 248.4 L390.6 247 L391 248 L392 249.3 L393 249.1 L394 248.7 L395 248.5 L396 248.4 L397 248.5 L398 248.4 L399 248.6 L400 248.7 L401 248.5 L402 248.4 L403 248.4 L404 248.5 L405 248.7 L406 248.8 L407 248.5 L408 248.8 L409 248.7 L410 248.6 L411 248.5 L412 248.6 L413 248.8 L414 248.6 L415 248.7 L416 248.6 L417 248.5 L418 248.7 L419 248.8 L420 248.4 L421 248.6 L422 248.6 L423 248.9 L424 248.9 L425 248.6 L426 248.9 L427 248.8 L428 248.5 L429 248.6 L430 248.4 L431 248.8 L432 248.8 L433 248.9 L434 245.8 L435 243.5 L436 246.9 L437 248.7 L438 248.4 L439 248.7 L440 248.4 L441 248.5 L442 248.8 L443 248.4 L444 248.4 L445 248.4 L446 248.9 L447 248.5 L448 248.4 L449 248.9 L450 248.5 L451 248.9 L452 248.4 L453 245.6 L454 243 L455 246.1 L456 248.9 L457 248.4 L458 248.9 L459 248.7 L460 248.8 L461 248.5 L462 248.9 L463 249 L464 248.4 L465 248.6 L466 248.7 L467 248.9 L468 248.6 L469 240 L470 231.3 L471 240 L472 248.9 L473 248.7 L474 248.6 L475 246.8 L476 244.5 L477 246.8 L478 248.5 L479 248.7 L480 249 L481 248.7 L482 248.9 L483 248.5 L484 248.8 L485 248.9 L486 248.8 L487 248.7 L488 248.7 L489 248.8 L490 249 L491 248.5 L492 248.5 L493 248.9 L494 249 L495 248.8 L496 248.7 L497 248.9 L498 247.4 L499 244.8 L500 246.6 L501 248.8 L502 248.7 L503 248.6 L504 248.9 L505 249 L506 248.6 L507 248.9 L508 248.7 L509 249 L510 247.8 L511 242.8 L511.4 240.8 L512 243.8 L513 248.8 L514 248.7 L515 248.6 L516 248.7 L517 248.7 L518 248.9 L519 247.6 L520 244.7 L520.6 243 L521 244.2 L522 247.1 L523 249 L524 249 L525 248.8 L526 248.8 L527 248.9 L528 249 L529 248.1 L530 247.6 L531 232 L532 236 L533 232.5 L534 225.5 L535 236 L536 237.4 L537 237.4 L538 236.5 L539 234.2 L540 235.7" fill="none" stroke="#9a62b0" stroke-width="1.1"/>
<text x="145.3" y="182.1" font-size="6.5" text-anchor="end" fill="#3d3d3d" font-weight="normal" textLength="13.5" lengthAdjust="spacingAndGlyphs" stroke="#3d3d3d" stroke-width="0.05">100%</text>
<text x="145.3" y="200.4" font-size="6.5" text-anchor="end" fill="#3d3d3d" font-weight="normal" textLength="10.4" lengthAdjust="spacingAndGlyphs" stroke="#3d3d3d" stroke-width="0.05">75%</text>
<text x="145.3" y="218.7" font-size="6.5" text-anchor="end" fill="#3d3d3d" font-weight="normal" textLength="10.4" lengthAdjust="spacingAndGlyphs" stroke="#3d3d3d" stroke-width="0.05">50%</text>
<text x="145.3" y="237" font-size="6.5" text-anchor="end" fill="#3d3d3d" font-weight="normal" textLength="10.4" lengthAdjust="spacingAndGlyphs" stroke="#3d3d3d" stroke-width="0.05">25%</text>
<text x="145.3" y="255.3" font-size="6.5" text-anchor="end" fill="#3d3d3d" font-weight="normal" textLength="7.2" lengthAdjust="spacingAndGlyphs" stroke="#3d3d3d" stroke-width="0.05">0%</text>
<text x="176.2" y="262.6" font-size="6.5" text-anchor="middle" fill="#3d3d3d" font-weight="normal" textLength="15.2" lengthAdjust="spacingAndGlyphs" stroke="#3d3d3d" stroke-width="0.05">05/06</text>
<text x="176.2" y="270.8" font-size="6.5" text-anchor="middle" fill="#3d3d3d" font-weight="normal" textLength="13.6" lengthAdjust="spacingAndGlyphs" stroke="#3d3d3d" stroke-width="0.05">16:00</text>
<text x="208.8" y="262.6" font-size="6.5" text-anchor="middle" fill="#3d3d3d" font-weight="normal" textLength="15.2" lengthAdjust="spacingAndGlyphs" stroke="#3d3d3d" stroke-width="0.05">05/06</text>
<text x="208.8" y="270.8" font-size="6.5" text-anchor="middle" fill="#3d3d3d" font-weight="normal" textLength="13.6" lengthAdjust="spacingAndGlyphs" stroke="#3d3d3d" stroke-width="0.05">20:00</text>
<text x="241.5" y="262.6" font-size="6.5" text-anchor="middle" fill="#3d3d3d" font-weight="normal" textLength="15.2" lengthAdjust="spacingAndGlyphs" stroke="#3d3d3d" stroke-width="0.05">05/07</text>
<text x="241.5" y="270.8" font-size="6.5" text-anchor="middle" fill="#3d3d3d" font-weight="normal" textLength="13.6" lengthAdjust="spacingAndGlyphs" stroke="#3d3d3d" stroke-width="0.05">00:00</text>
<text x="274.1" y="262.6" font-size="6.5" text-anchor="middle" fill="#3d3d3d" font-weight="normal" textLength="15.2" lengthAdjust="spacingAndGlyphs" stroke="#3d3d3d" stroke-width="0.05">05/07</text>
<text x="274.1" y="270.8" font-size="6.5" text-anchor="middle" fill="#3d3d3d" font-weight="normal" textLength="13.6" lengthAdjust="spacingAndGlyphs" stroke="#3d3d3d" stroke-width="0.05">04:00</text>
<text x="306.8" y="262.6" font-size="6.5" text-anchor="middle" fill="#3d3d3d" font-weight="normal" textLength="15.2" lengthAdjust="spacingAndGlyphs" stroke="#3d3d3d" stroke-width="0.05">05/07</text>
<text x="306.8" y="270.8" font-size="6.5" text-anchor="middle" fill="#3d3d3d" font-weight="normal" textLength="13.6" lengthAdjust="spacingAndGlyphs" stroke="#3d3d3d" stroke-width="0.05">08:00</text>
<text x="339.4" y="262.6" font-size="6.5" text-anchor="middle" fill="#3d3d3d" font-weight="normal" textLength="15.2" lengthAdjust="spacingAndGlyphs" stroke="#3d3d3d" stroke-width="0.05">05/07</text>
<text x="339.4" y="270.8" font-size="6.5" text-anchor="middle" fill="#3d3d3d" font-weight="normal" textLength="13.6" lengthAdjust="spacingAndGlyphs" stroke="#3d3d3d" stroke-width="0.05">12:00</text>
<text x="372.1" y="262.6" font-size="6.5" text-anchor="middle" fill="#3d3d3d" font-weight="normal" textLength="15.2" lengthAdjust="spacingAndGlyphs" stroke="#3d3d3d" stroke-width="0.05">05/07</text>
<text x="372.1" y="270.8" font-size="6.5" text-anchor="middle" fill="#3d3d3d" font-weight="normal" textLength="13.6" lengthAdjust="spacingAndGlyphs" stroke="#3d3d3d" stroke-width="0.05">16:00</text>
<text x="404.8" y="262.6" font-size="6.5" text-anchor="middle" fill="#3d3d3d" font-weight="normal" textLength="15.2" lengthAdjust="spacingAndGlyphs" stroke="#3d3d3d" stroke-width="0.05">05/07</text>
<text x="404.8" y="270.8" font-size="6.5" text-anchor="middle" fill="#3d3d3d" font-weight="normal" textLength="13.6" lengthAdjust="spacingAndGlyphs" stroke="#3d3d3d" stroke-width="0.05">20:00</text>
<text x="437.4" y="262.6" font-size="6.5" text-anchor="middle" fill="#3d3d3d" font-weight="normal" textLength="15.2" lengthAdjust="spacingAndGlyphs" stroke="#3d3d3d" stroke-width="0.05">05/08</text>
<text x="437.4" y="270.8" font-size="6.5" text-anchor="middle" fill="#3d3d3d" font-weight="normal" textLength="13.6" lengthAdjust="spacingAndGlyphs" stroke="#3d3d3d" stroke-width="0.05">00:00</text>
<text x="470" y="262.6" font-size="6.5" text-anchor="middle" fill="#3d3d3d" font-weight="normal" textLength="15.2" lengthAdjust="spacingAndGlyphs" stroke="#3d3d3d" stroke-width="0.05">05/08</text>
<text x="470" y="270.8" font-size="6.5" text-anchor="middle" fill="#3d3d3d" font-weight="normal" textLength="13.6" lengthAdjust="spacingAndGlyphs" stroke="#3d3d3d" stroke-width="0.05">04:00</text>
<text x="502.7" y="262.6" font-size="6.5" text-anchor="middle" fill="#3d3d3d" font-weight="normal" textLength="15.2" lengthAdjust="spacingAndGlyphs" stroke="#3d3d3d" stroke-width="0.05">05/08</text>
<text x="502.7" y="270.8" font-size="6.5" text-anchor="middle" fill="#3d3d3d" font-weight="normal" textLength="13.6" lengthAdjust="spacingAndGlyphs" stroke="#3d3d3d" stroke-width="0.05">08:00</text>
<text x="535.3" y="262.6" font-size="6.5" text-anchor="middle" fill="#3d3d3d" font-weight="normal" textLength="15.2" lengthAdjust="spacingAndGlyphs" stroke="#3d3d3d" stroke-width="0.05">05/08</text>
<text x="535.3" y="270.8" font-size="6.5" text-anchor="middle" fill="#3d3d3d" font-weight="normal" textLength="13.6" lengthAdjust="spacingAndGlyphs" stroke="#3d3d3d" stroke-width="0.05">12:00</text>
<text x="343.5" y="166" font-size="6.3" text-anchor="middle" fill="#2a2d33" font-weight="bold" textLength="73.4" lengthAdjust="spacingAndGlyphs">CPU-Auslastung gesamt</text>
<text x="130.1" y="162.2" font-size="6.2" text-anchor="start" fill="#505050" font-weight="bold">i</text>
<rect x="136" y="279.2" width="6.2" height="1.9" fill="#7eb26d"/>
<text x="146.2" y="282.1" font-size="6.4" text-anchor="start" fill="#3d3d3d" font-weight="normal" textLength="59.5" lengthAdjust="spacingAndGlyphs" stroke="#3d3d3d" stroke-width="0.05">cpu:percent-user:value</text>
<rect x="210.8" y="279.2" width="6.2" height="1.9" fill="#eab839"/>
<text x="221" y="282.1" font-size="6.4" text-anchor="start" fill="#3d3d3d" font-weight="normal" textLength="66.6" lengthAdjust="spacingAndGlyphs" stroke="#3d3d3d" stroke-width="0.05">cpu:percent-system:value</text>
<rect x="293" y="279.2" width="6.2" height="1.9" fill="#6ed0e0"/>
<text x="303.2" y="282.1" font-size="6.4" text-anchor="start" fill="#3d3d3d" font-weight="normal" textLength="70.1" lengthAdjust="spacingAndGlyphs" stroke="#3d3d3d" stroke-width="0.05">cpu:percent-interrupt:value</text>
<rect x="378.5" y="279.2" width="6.2" height="1.9" fill="#ef843c"/>
<text x="388.7" y="282.1" font-size="6.4" text-anchor="start" fill="#3d3d3d" font-weight="normal" textLength="58" lengthAdjust="spacingAndGlyphs" stroke="#3d3d3d" stroke-width="0.05">cpu:percent-nice:value</text>
<rect x="452.7" y="279.2" width="6.2" height="1.9" fill="#e24d42"/>
<text x="462.9" y="282.1" font-size="6.4" text-anchor="start" fill="#3d3d3d" font-weight="normal" textLength="64" lengthAdjust="spacingAndGlyphs" stroke="#3d3d3d" stroke-width="0.05">cpu:percent-softirq:value</text>
<rect x="136" y="287.8" width="6.2" height="1.9" fill="#1f78c1"/>
<text x="146.2" y="290.7" font-size="6.4" text-anchor="start" fill="#3d3d3d" font-weight="normal" textLength="60.8" lengthAdjust="spacingAndGlyphs" stroke="#3d3d3d" stroke-width="0.05">cpu:percent-steal:value</text>
<rect x="212.2" y="287.8" width="6.2" height="1.9" fill="#ba43a9"/>
<text x="222.4" y="290.7" font-size="6.4" text-anchor="start" fill="#3d3d3d" font-weight="normal" textLength="59" lengthAdjust="spacingAndGlyphs" stroke="#3d3d3d" stroke-width="0.05">cpu:percent-wait:value</text>
<rect x="286.5" y="287.8" width="6.2" height="1.9" fill="#705da0"/>
<text x="296.7" y="290.7" font-size="6.4" text-anchor="start" fill="#3d3d3d" font-weight="normal" textLength="56.8" lengthAdjust="spacingAndGlyphs" stroke="#3d3d3d" stroke-width="0.05">cpu:percent-idle:value</text>
<rect x="226.1" y="194.2" width="33.9" height="20.3" rx="1.6" fill="#ff0000"/>
<text x="228.7" y="207" font-size="8.6" text-anchor="start" fill="#fff" font-weight="bold" textLength="21.5" lengthAdjust="spacingAndGlyphs">1-2%</text>
<path d="M256.9 214.5 L257.3 232" stroke="#dc2a2a" stroke-width="1.1"/><path d="M254.6 230.8 L257.5 239.4 L260.2 230.6 L257.4 232.4 Z" fill="#dc2a2a"/>
<rect x="434.2" y="193" width="33.4" height="20.6" rx="1.6" fill="#ff0000"/>
<text x="435.8" y="206.1" font-size="8.6" text-anchor="start" fill="#fff" font-weight="bold" textLength="22.1" lengthAdjust="spacingAndGlyphs">5-6%</text>
<path d="M419.9 215 L399.5 237.5" stroke="#dc2a2a" stroke-width="1.1"/><path d="M395.2 242.4 L397.5 234.4 L399.2 237.6 L402.5 239.2 Z" fill="#dc2a2a"/>
<line x1="583.8" y1="179.8" x2="977.8" y2="179.8" stroke="#000" stroke-opacity="0.075" stroke-width="0.7"/>
<line x1="583.8" y1="193.6" x2="977.8" y2="193.6" stroke="#000" stroke-opacity="0.075" stroke-width="0.7"/>
<line x1="583.8" y1="207.4" x2="977.8" y2="207.4" stroke="#000" stroke-opacity="0.075" stroke-width="0.7"/>
<line x1="583.8" y1="221.2" x2="977.8" y2="221.2" stroke="#000" stroke-opacity="0.075" stroke-width="0.7"/>
<line x1="583.8" y1="235.1" x2="977.8" y2="235.1" stroke="#000" stroke-opacity="0.075" stroke-width="0.7"/>
<line x1="583.8" y1="248.9" x2="977.8" y2="248.9" stroke="#000" stroke-opacity="0.075" stroke-width="0.7"/>
<line x1="583.8" y1="262.7" x2="977.8" y2="262.7" stroke="#000" stroke-opacity="0.075" stroke-width="0.7"/>
<line x1="611.2" y1="179.8" x2="611.2" y2="262.7" stroke="#000" stroke-opacity="0.075" stroke-width="0.7"/>
<line x1="644.1" y1="179.8" x2="644.1" y2="262.7" stroke="#000" stroke-opacity="0.075" stroke-width="0.7"/>
<line x1="676.9" y1="179.8" x2="676.9" y2="262.7" stroke="#000" stroke-opacity="0.075" stroke-width="0.7"/>
<line x1="709.8" y1="179.8" x2="709.8" y2="262.7" stroke="#000" stroke-opacity="0.075" stroke-width="0.7"/>
<line x1="742.6" y1="179.8" x2="742.6" y2="262.7" stroke="#000" stroke-opacity="0.075" stroke-width="0.7"/>
<line x1="775.5" y1="179.8" x2="775.5" y2="262.7" stroke="#000" stroke-opacity="0.075" stroke-width="0.7"/>
<line x1="808.3" y1="179.8" x2="808.3" y2="262.7" stroke="#000" stroke-opacity="0.075" stroke-width="0.7"/>
<line x1="841.2" y1="179.8" x2="841.2" y2="262.7" stroke="#000" stroke-opacity="0.075" stroke-width="0.7"/>
<line x1="874" y1="179.8" x2="874" y2="262.7" stroke="#000" stroke-opacity="0.075" stroke-width="0.7"/>
<line x1="906.9" y1="179.8" x2="906.9" y2="262.7" stroke="#000" stroke-opacity="0.075" stroke-width="0.7"/>
<line x1="939.7" y1="179.8" x2="939.7" y2="262.7" stroke="#000" stroke-opacity="0.075" stroke-width="0.7"/>
<line x1="972.6" y1="179.8" x2="972.6" y2="262.7" stroke="#000" stroke-opacity="0.075" stroke-width="0.7"/>
<path d="M583.8 260.1 L584.8 260 L585.8 259.8 L586.8 256.6 L587.8 254.8 L588.8 259.7 L589.8 257.3 L590.8 259.6 L591.8 260.2 L592.8 260.3 L593.8 256.6 L594.8 258.9 L595.8 259.5 L596.8 260.8 L597.8 258 L598.8 256.1 L599.2 254.8 L599.8 256.9 L600.8 260.1 L601.8 259.4 L602.8 258.8 L603.8 259.4 L604.8 260.5 L605.8 256.2 L606.8 258.9 L607.8 259.3 L608.8 259.2 L609.8 259.3 L610.8 259.2 L611.8 260.5 L612.8 260.5 L613.8 260 L614.8 259.2 L615.8 259.7 L616.8 259.8 L617.8 259.2 L618.8 260.1 L619.8 260.7 L620.8 260.8 L621.8 260 L622.8 258.8 L623.8 257.3 L624.8 259.6 L625.8 256.6 L626.8 259.8 L627.8 259.8 L628.8 260.8 L629.8 259.5 L630.8 259.6 L631.8 259.7 L632.8 259.2 L633.8 256.1 L634.8 257.4 L635.8 259.7 L636.8 258.1 L637.8 259.4 L638.8 258.3 L639.8 258.3 L640.8 260.3 L641.8 259.5 L642.8 258.7 L643.8 259.1 L644.8 260.2 L645.8 259.5 L646.8 257.8 L647.8 258.2 L648.8 258.8 L649.8 258.7 L650.8 256.5 L651.8 258.2 L652.8 259.1 L653.8 255.6 L654.8 256 L655.8 258.7 L656.8 258.7 L657.8 259.2 L658.8 257.4 L659.2 256.7 L659.8 257.4 L660.8 258.5 L661.8 259.4 L662.8 257.3 L663.8 258.1 L664.8 258.8 L665.8 257 L666.4 252 L666.8 255.8 L667.8 257.4 L668.8 258 L669.8 259.4 L670.8 257.8 L671.8 258 L672.8 259.5 L673.8 256 L674.8 256 L675.8 255.1 L676.8 250.9 L677.8 255.9 L678.8 258 L679.8 258.5 L680.8 258.9 L681.8 257.3 L682.8 259.2 L683.8 258.2 L684.8 258.9 L685.8 259.9 L686.8 258.7 L687.8 258.6 L688.8 260.3 L689.8 260.5 L690.8 258.8 L691.8 258.1 L692.8 259.2 L693.8 260 L694.8 258.5 L695.8 259.1 L696.8 259.2 L697.8 258.9 L698.8 257.8 L699.8 255.5 L700.8 253.4 L701.2 252.2 L701.8 252.3 L702.8 257.1 L703.8 257.5 L704.8 258.5 L705.8 258.4 L706.8 257.4 L707.8 256.8 L708.8 255.5 L709.8 248.9 L710.8 253.4 L711.8 257.8 L712.8 258.2 L713.8 252.4 L714.8 245.8 L715.8 251.2 L716.8 257.1 L717.8 257.8 L718.8 258 L719.8 257.5 L720.8 254.8 L721.8 257.8 L722.8 258 L723.8 258.1 L724.8 258 L725.8 259.3 L726.8 260 L727.8 259.5 L728.8 259.1 L729.8 259.8 L730.8 259.7 L731.8 258.7 L732.8 258.8 L733.8 259.5 L734.8 260.6 L735.8 258.7 L736.8 254.9 L737.3 252.8 L737.8 254.9 L738.8 259.3 L739.8 259.7 L740.8 259.2 L741.8 260.8 L742.8 259.4 L743.8 259.2 L744.8 259.2 L745.8 260.1 L746.8 260.2 L747.8 259.8 L748.8 259.9 L749.8 260.5 L750.8 259.7 L751.8 258.6 L752.8 256.3 L753.8 258.4 L754.8 258.6 L755.8 260.1 L756.8 259.9 L757.8 258.6 L758.8 256 L759.8 258 L760.8 256.9 L761.8 259.8 L762.8 258.3 L763.8 260 L764.8 257.1 L765.8 254.8 L766.8 256.8 L767.8 259.1 L768.8 259.3 L769.8 259.8 L770.8 260.2 L771.8 260.3 L772.8 256.8 L773.8 259.8 L774.8 259.1 L775.8 256.6 L776.8 259 L777.8 257 L778.8 258.4 L779.8 259.9 L780.8 259.4 L781.8 259.9 L782.8 259.4 L783.8 258.8 L784.8 258.7 L785.8 259.6 L786.8 259.4 L787.8 258.7 L788.8 258.8 L789.8 258.4 L790.8 258.4 L791.8 258.4 L792.8 252.8 L793.8 240.3 L794.8 248.6 L795.8 255.4 L796.8 255.1 L797.8 254.9 L798.8 255.8 L799.8 254.8 L800.8 254.3 L801.8 254.4 L802.8 255.2 L803.8 255.1 L804.8 253.9 L805.8 251.3 L806.4 251 L806.8 252.4 L807.8 255.2 L808.8 254.2 L809.8 254.7 L810.8 255.4 L811.8 254.9 L812.8 253.6 L813.8 254 L814.8 255.5 L815.8 256.1 L816.8 256.3 L817.8 256.6 L818.8 257.1 L819.8 256.8 L820.8 255.7 L821.8 257.3 L822.8 257.1 L823.8 257.8 L824.8 252.4 L825.8 253.4 L826.8 253.8 L827.8 251.8 L828.8 249.8 L829.8 249.1 L830.8 250 L831.8 251.9 L832.8 249.9 L833.8 248.8 L834.8 249.3 L835.8 250.5 L836.8 249.4 L837.8 248.6 L838.8 244.9 L839.8 251.3 L840.8 251 L841.8 249.4 L842.8 249.4 L843.8 250.5 L844.8 249.4 L845.8 248.9 L846.8 250.8 L847.8 252 L848.8 247.8 L849.8 248.8 L850.8 249.6 L851.8 251.1 L852.8 250.5 L853.8 246.8 L854.8 251.4 L855.8 251.7 L856.8 251.1 L857.8 249.8 L858.8 249.3 L859.8 251.8 L860.8 250.4 L861.8 247 L862.8 249.3 L863.8 252.1 L864.8 251.4 L865.8 249.3 L866.8 247 L867.8 252.2 L868.8 252.1 L869.8 251.4 L870.8 247.8 L871.8 241.6 L872.8 247.8 L873.8 249.7 L874.8 250.3 L875.8 251.7 L876.8 251.8 L877.8 249.9 L878.8 250.7 L879.8 251.5 L880.8 248.8 L881.8 249 L882.8 249.8 L883.8 250.8 L884.8 248.1 L885.8 250.3 L886.8 249.1 L887.8 249.5 L888.8 245.7 L889.8 247.2 L890.8 243.8 L891.3 241.6 L891.8 243.8 L892.8 249.5 L893.8 248.6 L894.8 248.9 L895.8 248.8 L896.8 249.2 L897.8 248.8 L898.8 248 L899.8 249.5 L900.8 248.8 L901.8 249.4 L902.8 247.3 L903.8 249.8 L904.8 251 L905.8 236.5 L906.8 219.8 L907.8 230.9 L908.8 244.9 L909.8 250.7 L910.8 249.6 L911.8 251.4 L912.8 252.2 L913.8 247.9 L914.8 251.6 L915.8 252.2 L916.8 252.2 L917.8 250.8 L918.8 250.4 L919.8 251.5 L920.8 251.7 L921.8 252.1 L922.8 251.6 L923.8 251.7 L924.8 252.2 L925.8 250.4 L926.8 249.7 L927.8 250.7 L928.8 252.3 L929.8 251 L930.8 251.4 L931.8 251.2 L932.8 247.5 L933.8 249.3 L934.8 248.9 L935.8 243.2 L936.3 239.7 L936.8 243.2 L937.8 251.1 L938.8 250.4 L939.8 247.7 L940.8 250.1 L941.8 250.3 L942.8 249.6 L943.8 250 L944.8 246.4 L945.8 252.2 L946.8 250.9 L947.8 250.2 L948.8 250.8 L949.8 250.2 L950.8 249.9 L951.8 251.1 L952.8 251.5 L953.8 252.1 L954.8 249.4 L955.8 249.4 L956.8 248.3 L957.8 245 L958.8 248.2 L959.8 250.2 L960.8 252 L961.8 251 L962.8 250.2 L963.8 248.9 L964.8 250.6 L965.8 250.5 L966.8 240.9 L967.8 213 L968.8 206 L969.8 207.4 L970.8 198.9 L971.4 191 L971.8 197.2 L972.8 205.7 L973.8 215.4 L974.8 215.5 L975.8 214.3 L976.3 236.1 L976.8 218.2 L977.8 219.3 L977.8 262.7 L583.8 262.7 Z" fill="#7eb26d" fill-opacity="0.32"/>
<path d="M583.8 260.4 L584.8 259.7 L585.8 258.5 L586.8 256.5 L587.8 256.4 L588.8 256.8 L589.8 258.6 L590.8 259 L591.8 259.7 L592.8 259.3 L593.8 258.4 L594.8 258.5 L595.8 259.9 L596.8 259.5 L597.8 258.1 L598.8 256.2 L599.2 255.2 L599.8 257.1 L600.8 258.5 L601.8 259.5 L602.8 259.3 L603.8 259.3 L604.8 258.3 L605.8 258 L606.8 257.7 L607.8 258.7 L608.8 259.1 L609.8 259.6 L610.8 259.6 L611.8 260 L612.8 260.4 L613.8 259.7 L614.8 259.8 L615.8 259.7 L616.8 259.3 L617.8 259.5 L618.8 260.2 L619.8 261 L620.8 260.7 L621.8 259.8 L622.8 259 L623.8 258 L624.8 257.3 L625.8 258.8 L626.8 258.5 L627.8 259.8 L628.8 260.1 L629.8 260.4 L630.8 259.6 L631.8 259.4 L632.8 257.9 L633.8 257 L634.8 257.8 L635.8 258.2 L636.8 259.4 L637.8 258.1 L638.8 258.4 L639.8 258.5 L640.8 259.3 L641.8 259.2 L642.8 258.9 L643.8 259.3 L644.8 259.5 L645.8 258.8 L646.8 258.1 L647.8 258.6 L648.8 258.3 L649.8 257.9 L650.8 257.6 L651.8 257.8 L652.8 257.2 L653.8 256.5 L654.8 256.2 L655.8 257.7 L656.8 259.2 L657.8 258.5 L658.8 257.9 L659.2 256.7 L659.8 257 L660.8 258.4 L661.8 258.3 L662.8 258.2 L663.8 257.9 L664.8 258 L665.8 255.8 L666.4 254.8 L666.8 254.5 L667.8 256.9 L668.8 258.5 L669.8 258.2 L670.8 258.1 L671.8 258.3 L672.8 257.4 L673.8 257.2 L674.8 255.6 L675.8 253.3 L676.8 253.1 L677.8 254.1 L678.8 257.1 L679.8 258.1 L680.8 258.1 L681.8 258.5 L682.8 257.9 L683.8 258.4 L684.8 259.2 L685.8 258.8 L686.8 258.8 L687.8 259.1 L688.8 259.7 L689.8 259.6 L690.8 259 L691.8 258.5 L692.8 259.3 L693.8 259.3 L694.8 259.6 L695.8 259.1 L696.8 259.4 L697.8 258.8 L698.8 257.3 L699.8 255.5 L700.8 253.3 L701.2 252.4 L701.8 253.6 L702.8 255.5 L703.8 257.5 L704.8 258.4 L705.8 258 L706.8 257.2 L707.8 256.1 L708.8 253 L709.8 251.8 L710.8 252.9 L711.8 256.1 L712.8 255.6 L713.8 251.7 L714.8 248.9 L715.8 250.2 L716.8 254.7 L717.8 257.3 L718.8 257.6 L719.8 256.9 L720.8 256.9 L721.8 256.8 L722.8 257.7 L723.8 257.9 L724.8 258.3 L725.8 259 L726.8 259.3 L727.8 259.6 L728.8 259.7 L729.8 259.7 L730.8 259 L731.8 259 L732.8 258.6 L733.8 259.8 L734.8 259.5 L735.8 258.2 L736.8 255.2 L737.3 253.3 L737.8 255.1 L738.8 258.1 L739.8 259.3 L740.8 259.9 L741.8 259.8 L742.8 260 L743.8 259.6 L744.8 259.5 L745.8 260.2 L746.8 260.2 L747.8 259.7 L748.8 260.4 L749.8 260 L750.8 259.3 L751.8 258.4 L752.8 257.2 L753.8 257.6 L754.8 258.9 L755.8 259.8 L756.8 259.4 L757.8 257.8 L758.8 257.1 L759.8 256.4 L760.8 258.1 L761.8 258.1 L762.8 259.5 L763.8 258.1 L764.8 256.9 L765.8 255.6 L766.8 257 L767.8 258.5 L768.8 259.6 L769.8 259.9 L770.8 260.1 L771.8 258.8 L772.8 259.2 L773.8 258.5 L774.8 258 L775.8 257.8 L776.8 257 L777.8 258.1 L778.8 258.6 L779.8 258.9 L780.8 260 L781.8 259.4 L782.8 259.5 L783.8 259.2 L784.8 259.1 L785.8 259.5 L786.8 259.2 L787.8 258.6 L788.8 258.6 L789.8 258.6 L790.8 258.1 L791.8 256.3 L792.8 249.5 L793.8 245.7 L794.8 246.9 L795.8 252.6 L796.8 255 L797.8 255.4 L798.8 255.1 L799.8 255.4 L800.8 254.8 L801.8 255 L802.8 255.1 L803.8 254.9 L804.8 253.3 L805.8 252 L806.4 251.1 L806.8 252.7 L807.8 254 L808.8 254.7 L809.8 254.6 L810.8 254.7 L811.8 254.3 L812.8 253.9 L813.8 254.3 L814.8 255.4 L815.8 256.2 L816.8 256.3 L817.8 257.1 L818.8 256.7 L819.8 256.6 L820.8 256.1 L821.8 256.8 L822.8 257.6 L823.8 256.1 L824.8 254.8 L825.8 253.2 L826.8 253.3 L827.8 251.9 L828.8 250.2 L829.8 249.3 L830.8 250.4 L831.8 251 L832.8 250 L833.8 249.6 L834.8 249.5 L835.8 249.6 L836.8 249 L837.8 247.2 L838.8 247.8 L839.8 249 L840.8 250.9 L841.8 250.2 L842.8 249.8 L843.8 249.6 L844.8 249.2 L845.8 249.8 L846.8 250.7 L847.8 250.4 L848.8 249.4 L849.8 248.8 L850.8 249.5 L851.8 250.2 L852.8 249.2 L853.8 249.6 L854.8 250.2 L855.8 251.2 L856.8 251 L857.8 250.2 L858.8 250.1 L859.8 250.1 L860.8 249.7 L861.8 248.9 L862.8 249.6 L863.8 251.1 L864.8 250.9 L865.8 249 L866.8 249.3 L867.8 250.7 L868.8 251.8 L869.8 250.2 L870.8 246.5 L871.8 245.5 L872.8 245.6 L873.8 248.7 L874.8 250.2 L875.8 251.4 L876.8 251.3 L877.8 250.6 L878.8 250.5 L879.8 250.4 L880.8 249.8 L881.8 249.2 L882.8 250 L883.8 249.1 L884.8 249.7 L885.8 249.3 L886.8 249.9 L887.8 247.7 L888.8 247.4 L889.8 245.2 L890.8 243.9 L891.3 242.1 L891.8 244.6 L892.8 247.3 L893.8 248.9 L894.8 248.4 L895.8 248.7 L896.8 248.6 L897.8 248.3 L898.8 248.5 L899.8 248.8 L900.8 248.9 L901.8 248.6 L902.8 249 L903.8 249.6 L904.8 245.5 L905.8 234.2 L906.8 226.9 L907.8 230 L908.8 241.3 L909.8 248.5 L910.8 250.2 L911.8 250.7 L912.8 250.1 L913.8 250.2 L914.8 250.4 L915.8 252.1 L916.8 251.9 L917.8 251.3 L918.8 250.5 L919.8 251.1 L920.8 251.8 L921.8 251.8 L922.8 251.6 L923.8 252 L924.8 251.4 L925.8 250.9 L926.8 250.2 L927.8 251.3 L928.8 251.7 L929.8 251.3 L930.8 251.5 L931.8 250.1 L932.8 249 L933.8 247.9 L934.8 246.6 L935.8 243 L936.3 241.2 L936.8 244.3 L937.8 247.8 L938.8 249.4 L939.8 249.2 L940.8 249.3 L941.8 250.1 L942.8 249.9 L943.8 248.2 L944.8 249.3 L945.8 250 L946.8 251.2 L947.8 250.3 L948.8 250.3 L949.8 250 L950.8 250.5 L951.8 250.5 L952.8 251.5 L953.8 250.7 L954.8 250.2 L955.8 249.2 L956.8 247.2 L957.8 246.6 L958.8 247.8 L959.8 249.8 L960.8 251 L961.8 251.4 L962.8 249.6 L963.8 250 L964.8 249.8 L965.8 246.6 L966.8 233.6 L967.8 220.8 L968.8 208.5 L969.8 203.3 L970.8 197.2 L971.4 193.4 L971.8 196.5 L972.8 205.1 L973.8 211.9 L974.8 214.7 L975.8 222.5 L976.3 223.9 L976.8 225.6 L977.8 218.8" fill="none" stroke="#eab839" stroke-width="1.1"/>
<path d="M583.8 260.1 L584.8 260 L585.8 259.8 L586.8 256.6 L587.8 254.8 L588.8 259.7 L589.8 257.3 L590.8 259.6 L591.8 260.2 L592.8 260.3 L593.8 256.6 L594.8 258.9 L595.8 259.5 L596.8 260.8 L597.8 258 L598.8 256.1 L599.2 254.8 L599.8 256.9 L600.8 260.1 L601.8 259.4 L602.8 258.8 L603.8 259.4 L604.8 260.5 L605.8 256.2 L606.8 258.9 L607.8 259.3 L608.8 259.2 L609.8 259.3 L610.8 259.2 L611.8 260.5 L612.8 260.5 L613.8 260 L614.8 259.2 L615.8 259.7 L616.8 259.8 L617.8 259.2 L618.8 260.1 L619.8 260.7 L620.8 260.8 L621.8 260 L622.8 258.8 L623.8 257.3 L624.8 259.6 L625.8 256.6 L626.8 259.8 L627.8 259.8 L628.8 260.8 L629.8 259.5 L630.8 259.6 L631.8 259.7 L632.8 259.2 L633.8 256.1 L634.8 257.4 L635.8 259.7 L636.8 258.1 L637.8 259.4 L638.8 258.3 L639.8 258.3 L640.8 260.3 L641.8 259.5 L642.8 258.7 L643.8 259.1 L644.8 260.2 L645.8 259.5 L646.8 257.8 L647.8 258.2 L648.8 258.8 L649.8 258.7 L650.8 256.5 L651.8 258.2 L652.8 259.1 L653.8 255.6 L654.8 256 L655.8 258.7 L656.8 258.7 L657.8 259.2 L658.8 257.4 L659.2 256.7 L659.8 257.4 L660.8 258.5 L661.8 259.4 L662.8 257.3 L663.8 258.1 L664.8 258.8 L665.8 257 L666.4 252 L666.8 255.8 L667.8 257.4 L668.8 258 L669.8 259.4 L670.8 257.8 L671.8 258 L672.8 259.5 L673.8 256 L674.8 256 L675.8 255.1 L676.8 250.9 L677.8 255.9 L678.8 258 L679.8 258.5 L680.8 258.9 L681.8 257.3 L682.8 259.2 L683.8 258.2 L684.8 258.9 L685.8 259.9 L686.8 258.7 L687.8 258.6 L688.8 260.3 L689.8 260.5 L690.8 258.8 L691.8 258.1 L692.8 259.2 L693.8 260 L694.8 258.5 L695.8 259.1 L696.8 259.2 L697.8 258.9 L698.8 257.8 L699.8 255.5 L700.8 253.4 L701.2 252.2 L701.8 252.3 L702.8 257.1 L703.8 257.5 L704.8 258.5 L705.8 258.4 L706.8 257.4 L707.8 256.8 L708.8 255.5 L709.8 248.9 L710.8 253.4 L711.8 257.8 L712.8 258.2 L713.8 252.4 L714.8 245.8 L715.8 251.2 L716.8 257.1 L717.8 257.8 L718.8 258 L719.8 257.5 L720.8 254.8 L721.8 257.8 L722.8 258 L723.8 258.1 L724.8 258 L725.8 259.3 L726.8 260 L727.8 259.5 L728.8 259.1 L729.8 259.8 L730.8 259.7 L731.8 258.7 L732.8 258.8 L733.8 259.5 L734.8 260.6 L735.8 258.7 L736.8 254.9 L737.3 252.8 L737.8 254.9 L738.8 259.3 L739.8 259.7 L740.8 259.2 L741.8 260.8 L742.8 259.4 L743.8 259.2 L744.8 259.2 L745.8 260.1 L746.8 260.2 L747.8 259.8 L748.8 259.9 L749.8 260.5 L750.8 259.7 L751.8 258.6 L752.8 256.3 L753.8 258.4 L754.8 258.6 L755.8 260.1 L756.8 259.9 L757.8 258.6 L758.8 256 L759.8 258 L760.8 256.9 L761.8 259.8 L762.8 258.3 L763.8 260 L764.8 257.1 L765.8 254.8 L766.8 256.8 L767.8 259.1 L768.8 259.3 L769.8 259.8 L770.8 260.2 L771.8 260.3 L772.8 256.8 L773.8 259.8 L774.8 259.1 L775.8 256.6 L776.8 259 L777.8 257 L778.8 258.4 L779.8 259.9 L780.8 259.4 L781.8 259.9 L782.8 259.4 L783.8 258.8 L784.8 258.7 L785.8 259.6 L786.8 259.4 L787.8 258.7 L788.8 258.8 L789.8 258.4 L790.8 258.4 L791.8 258.4 L792.8 252.8 L793.8 240.3 L794.8 248.6 L795.8 255.4 L796.8 255.1 L797.8 254.9 L798.8 255.8 L799.8 254.8 L800.8 254.3 L801.8 254.4 L802.8 255.2 L803.8 255.1 L804.8 253.9 L805.8 251.3 L806.4 251 L806.8 252.4 L807.8 255.2 L808.8 254.2 L809.8 254.7 L810.8 255.4 L811.8 254.9 L812.8 253.6 L813.8 254 L814.8 255.5 L815.8 256.1 L816.8 256.3 L817.8 256.6 L818.8 257.1 L819.8 256.8 L820.8 255.7 L821.8 257.3 L822.8 257.1 L823.8 257.8 L824.8 252.4 L825.8 253.4 L826.8 253.8 L827.8 251.8 L828.8 249.8 L829.8 249.1 L830.8 250 L831.8 251.9 L832.8 249.9 L833.8 248.8 L834.8 249.3 L835.8 250.5 L836.8 249.4 L837.8 248.6 L838.8 244.9 L839.8 251.3 L840.8 251 L841.8 249.4 L842.8 249.4 L843.8 250.5 L844.8 249.4 L845.8 248.9 L846.8 250.8 L847.8 252 L848.8 247.8 L849.8 248.8 L850.8 249.6 L851.8 251.1 L852.8 250.5 L853.8 246.8 L854.8 251.4 L855.8 251.7 L856.8 251.1 L857.8 249.8 L858.8 249.3 L859.8 251.8 L860.8 250.4 L861.8 247 L862.8 249.3 L863.8 252.1 L864.8 251.4 L865.8 249.3 L866.8 247 L867.8 252.2 L868.8 252.1 L869.8 251.4 L870.8 247.8 L871.8 241.6 L872.8 247.8 L873.8 249.7 L874.8 250.3 L875.8 251.7 L876.8 251.8 L877.8 249.9 L878.8 250.7 L879.8 251.5 L880.8 248.8 L881.8 249 L882.8 249.8 L883.8 250.8 L884.8 248.1 L885.8 250.3 L886.8 249.1 L887.8 249.5 L888.8 245.7 L889.8 247.2 L890.8 243.8 L891.3 241.6 L891.8 243.8 L892.8 249.5 L893.8 248.6 L894.8 248.9 L895.8 248.8 L896.8 249.2 L897.8 248.8 L898.8 248 L899.8 249.5 L900.8 248.8 L901.8 249.4 L902.8 247.3 L903.8 249.8 L904.8 251 L905.8 236.5 L906.8 219.8 L907.8 230.9 L908.8 244.9 L909.8 250.7 L910.8 249.6 L911.8 251.4 L912.8 252.2 L913.8 247.9 L914.8 251.6 L915.8 252.2 L916.8 252.2 L917.8 250.8 L918.8 250.4 L919.8 251.5 L920.8 251.7 L921.8 252.1 L922.8 251.6 L923.8 251.7 L924.8 252.2 L925.8 250.4 L926.8 249.7 L927.8 250.7 L928.8 252.3 L929.8 251 L930.8 251.4 L931.8 251.2 L932.8 247.5 L933.8 249.3 L934.8 248.9 L935.8 243.2 L936.3 239.7 L936.8 243.2 L937.8 251.1 L938.8 250.4 L939.8 247.7 L940.8 250.1 L941.8 250.3 L942.8 249.6 L943.8 250 L944.8 246.4 L945.8 252.2 L946.8 250.9 L947.8 250.2 L948.8 250.8 L949.8 250.2 L950.8 249.9 L951.8 251.1 L952.8 251.5 L953.8 252.1 L954.8 249.4 L955.8 249.4 L956.8 248.3 L957.8 245 L958.8 248.2 L959.8 250.2 L960.8 252 L961.8 251 L962.8 250.2 L963.8 248.9 L964.8 250.6 L965.8 250.5 L966.8 240.9 L967.8 213 L968.8 206 L969.8 207.4 L970.8 198.9 L971.4 191 L971.8 197.2 L972.8 205.7 L973.8 215.4 L974.8 215.5 L975.8 214.3 L976.3 236.1 L976.8 218.2 L977.8 219.3" fill="none" stroke="#7eb26d" stroke-width="1.0"/>
<path d="M583.8 258.9 L584.8 258.1 L585.8 258.3 L586.8 258.1 L587.8 258.1 L588.8 258.1 L589.8 258.2 L590.8 258.2 L591.8 258.8 L592.8 258.7 L593.8 259.2 L594.8 259 L595.8 258.4 L596.8 257.6 L597.8 257.7 L598.8 257.8 L599.2 257.8 L599.8 257.5 L600.8 257.7 L601.8 258.3 L602.8 258.5 L603.8 258.8 L604.8 258.7 L605.8 258.7 L606.8 258.8 L607.8 258.7 L608.8 258.7 L609.8 259.4 L610.8 259.5 L611.8 259.5 L612.8 259.6 L613.8 259.6 L614.8 259.6 L615.8 259.6 L616.8 259.6 L617.8 259.7 L618.8 259.8 L619.8 259.7 L620.8 259.4 L621.8 259.4 L622.8 258.9 L623.8 258.8 L624.8 258.6 L625.8 258.7 L626.8 258.8 L627.8 259.2 L628.8 259.2 L629.8 259.6 L630.8 259 L631.8 258.7 L632.8 258.5 L633.8 258.3 L634.8 258.3 L635.8 258.1 L636.8 258 L637.8 258.6 L638.8 258.9 L639.8 258.7 L640.8 258.9 L641.8 259 L642.8 259.2 L643.8 259.1 L644.8 258.8 L645.8 258.7 L646.8 258.7 L647.8 258.3 L648.8 258 L649.8 258 L650.8 257.7 L651.8 257.3 L652.8 257.3 L653.8 257.3 L654.8 257.7 L655.8 257.6 L656.8 257.3 L657.8 257.5 L658.8 257.9 L659.2 258 L659.8 257.8 L660.8 257.6 L661.8 257.8 L662.8 257.9 L663.8 257.1 L664.8 256.7 L665.8 256.4 L666.4 256.5 L666.8 256.7 L667.8 256.6 L668.8 256.7 L669.8 257.8 L670.8 257.8 L671.8 257.6 L672.8 257.2 L673.8 256 L674.8 255.7 L675.8 255.7 L676.8 255.5 L677.8 256 L678.8 256.1 L679.8 256.7 L680.8 257.8 L681.8 258.2 L682.8 258.5 L683.8 258.5 L684.8 258.5 L685.8 258.9 L686.8 259.1 L687.8 259.2 L688.8 259.1 L689.8 259 L690.8 259.1 L691.8 259.1 L692.8 259 L693.8 258.8 L694.8 258.8 L695.8 258.8 L696.8 258.2 L697.8 257.3 L698.8 256.4 L699.8 255.4 L700.8 255.1 L701.2 254.9 L701.8 255 L702.8 255.4 L703.8 256 L704.8 256.7 L705.8 257.1 L706.8 255.9 L707.8 255.3 L708.8 255.2 L709.8 255.2 L710.8 254.5 L711.8 252.9 L712.8 252.3 L713.8 253.5 L714.8 254.1 L715.8 254.2 L716.8 254.1 L717.8 254.4 L718.8 256.1 L719.8 257.1 L720.8 257.2 L721.8 257.2 L722.8 257.4 L723.8 257.8 L724.8 258.5 L725.8 258.6 L726.8 258.9 L727.8 259.1 L728.8 259.2 L729.8 259.2 L730.8 259.1 L731.8 259.2 L732.8 259.2 L733.8 258.5 L734.8 257.5 L735.8 257 L736.8 257 L737.3 257.1 L737.8 256.9 L738.8 257.2 L739.8 257.8 L740.8 258.7 L741.8 259.3 L742.8 259.4 L743.8 259.5 L744.8 259.6 L745.8 259.5 L746.8 259.6 L747.8 259.7 L748.8 259.6 L749.8 259.1 L750.8 258.8 L751.8 258.6 L752.8 258.7 L753.8 258.6 L754.8 258.4 L755.8 258.1 L756.8 258.3 L757.8 258.1 L758.8 258.3 L759.8 258 L760.8 258 L761.8 257.8 L762.8 257.6 L763.8 257.5 L764.8 257.8 L765.8 257.7 L766.8 257.9 L767.8 257.9 L768.8 258.4 L769.8 258.7 L770.8 259.1 L771.8 259.1 L772.8 258.8 L773.8 258.6 L774.8 258.2 L775.8 257.9 L776.8 258.4 L777.8 258.3 L778.8 258.4 L779.8 258.8 L780.8 258.8 L781.8 259 L782.8 259.2 L783.8 259.1 L784.8 259 L785.8 258.9 L786.8 258.7 L787.8 258.7 L788.8 258.6 L789.8 257.6 L790.8 254.9 L791.8 253.5 L792.8 253 L793.8 252.5 L794.8 252 L795.8 251.6 L796.8 251.9 L797.8 253.9 L798.8 254.8 L799.8 254.7 L800.8 254.7 L801.8 254.6 L802.8 254 L803.8 253.4 L804.8 253.1 L805.8 253.3 L806.4 253.1 L806.8 253 L807.8 253.3 L808.8 253.8 L809.8 254.1 L810.8 254.4 L811.8 254.4 L812.8 254.7 L813.8 254.9 L814.8 255.1 L815.8 255.4 L816.8 255.8 L817.8 256.1 L818.8 256.4 L819.8 256.5 L820.8 256.7 L821.8 256.1 L822.8 255.6 L823.8 255.2 L824.8 254.6 L825.8 253.5 L826.8 252.4 L827.8 251.3 L828.8 251.2 L829.8 250.7 L830.8 250 L831.8 249.6 L832.8 249.7 L833.8 249.8 L834.8 249.6 L835.8 248.5 L836.8 248.8 L837.8 249.1 L838.8 249.1 L839.8 248.9 L840.8 249.1 L841.8 249.2 L842.8 249.8 L843.8 249.7 L844.8 249.9 L845.8 249.6 L846.8 249.6 L847.8 249.4 L848.8 249.7 L849.8 249.9 L850.8 249.3 L851.8 249.2 L852.8 249.8 L853.8 250.1 L854.8 250.1 L855.8 249.9 L856.8 250.1 L857.8 250.6 L858.8 250 L859.8 249.6 L860.8 249.8 L861.8 250 L862.8 250 L863.8 249.3 L864.8 249.6 L865.8 250.3 L866.8 250.6 L867.8 250 L868.8 248.6 L869.8 248.4 L870.8 248.7 L871.8 248.5 L872.8 248.4 L873.8 248.5 L874.8 248.8 L875.8 250.1 L876.8 250.6 L877.8 250.5 L878.8 250.3 L879.8 250 L880.8 249.9 L881.8 249.6 L882.8 249.5 L883.8 249.2 L884.8 249.3 L885.8 248.8 L886.8 248.5 L887.8 247.5 L888.8 246.5 L889.8 245.6 L890.8 245.7 L891.3 245.5 L891.8 246 L892.8 246.2 L893.8 247 L894.8 248 L895.8 248.6 L896.8 248.6 L897.8 248.7 L898.8 248.7 L899.8 248.5 L900.8 248.6 L901.8 248.9 L902.8 247.3 L903.8 243 L904.8 240.5 L905.8 239.8 L906.8 240.3 L907.8 240.3 L908.8 240.4 L909.8 242.6 L910.8 246.6 L911.8 249.6 L912.8 250.6 L913.8 250.8 L914.8 251 L915.8 250.9 L916.8 250.7 L917.8 251.3 L918.8 251.4 L919.8 251.3 L920.8 251.2 L921.8 251.4 L922.8 251.4 L923.8 251.1 L924.8 251 L925.8 251 L926.8 251 L927.8 250.9 L928.8 250.8 L929.8 250.4 L930.8 250.3 L931.8 250 L932.8 248.7 L933.8 247.1 L934.8 245.9 L935.8 245.9 L936.3 246.3 L936.8 246.1 L937.8 246.3 L938.8 247.3 L939.8 248.7 L940.8 249.7 L941.8 249 L942.8 249.3 L943.8 249.7 L944.8 249.7 L945.8 249.8 L946.8 249.9 L947.8 249.9 L948.8 250.6 L949.8 250.5 L950.8 250.6 L951.8 250.5 L952.8 250.3 L953.8 250 L954.8 249.3 L955.8 248.9 L956.8 248.7 L957.8 248.7 L958.8 249 L959.8 249.1 L960.8 249.2 L961.8 250 L962.8 250.3 L963.8 249 L964.8 243.4 L965.8 236.9 L966.8 230.8 L967.8 223.7 L968.8 215.2 L969.8 207.6 L970.8 202.5 L971.4 202.9 L971.8 204.2 L972.8 205.2 L973.8 210.5 L974.8 214.4 L975.8 217.6 L976.3 219.6 L976.8 220.5 L977.8 221.8" fill="none" stroke="#6ed0e0" stroke-width="1.0" stroke-opacity="0.9"/>
<text x="581.7" y="181.9" font-size="6.1" text-anchor="end" fill="#474747" font-weight="normal">6</text>
<text x="581.7" y="195.7" font-size="6.1" text-anchor="end" fill="#474747" font-weight="normal">5</text>
<text x="581.7" y="209.5" font-size="6.1" text-anchor="end" fill="#474747" font-weight="normal">4</text>
<text x="581.7" y="223.3" font-size="6.1" text-anchor="end" fill="#474747" font-weight="normal">3</text>
<text x="581.7" y="237.2" font-size="6.1" text-anchor="end" fill="#474747" font-weight="normal">2</text>
<text x="581.7" y="251" font-size="6.1" text-anchor="end" fill="#474747" font-weight="normal">1</text>
<text x="581.7" y="264.8" font-size="6.1" text-anchor="end" fill="#474747" font-weight="normal">0</text>
<text x="0" y="0" font-size="6.5" fill="#444" text-anchor="middle" textLength="25.7" lengthAdjust="spacingAndGlyphs" transform="translate(574.5 228.4) rotate(-90)">Aufgaben</text>
<text x="612.1" y="271.2" font-size="6.5" text-anchor="middle" fill="#3d3d3d" font-weight="normal" textLength="15.2" lengthAdjust="spacingAndGlyphs" stroke="#3d3d3d" stroke-width="0.05">05/06</text>
<text x="612.1" y="280.1" font-size="6.5" text-anchor="middle" fill="#3d3d3d" font-weight="normal" textLength="13.6" lengthAdjust="spacingAndGlyphs" stroke="#3d3d3d" stroke-width="0.05">16:00</text>
<text x="645" y="271.2" font-size="6.5" text-anchor="middle" fill="#3d3d3d" font-weight="normal" textLength="15.2" lengthAdjust="spacingAndGlyphs" stroke="#3d3d3d" stroke-width="0.05">05/06</text>
<text x="645" y="280.1" font-size="6.5" text-anchor="middle" fill="#3d3d3d" font-weight="normal" textLength="13.6" lengthAdjust="spacingAndGlyphs" stroke="#3d3d3d" stroke-width="0.05">20:00</text>
<text x="677.8" y="271.2" font-size="6.5" text-anchor="middle" fill="#3d3d3d" font-weight="normal" textLength="15.2" lengthAdjust="spacingAndGlyphs" stroke="#3d3d3d" stroke-width="0.05">05/07</text>
<text x="677.8" y="280.1" font-size="6.5" text-anchor="middle" fill="#3d3d3d" font-weight="normal" textLength="13.6" lengthAdjust="spacingAndGlyphs" stroke="#3d3d3d" stroke-width="0.05">00:00</text>
<text x="710.6" y="271.2" font-size="6.5" text-anchor="middle" fill="#3d3d3d" font-weight="normal" textLength="15.2" lengthAdjust="spacingAndGlyphs" stroke="#3d3d3d" stroke-width="0.05">05/07</text>
<text x="710.6" y="280.1" font-size="6.5" text-anchor="middle" fill="#3d3d3d" font-weight="normal" textLength="13.6" lengthAdjust="spacingAndGlyphs" stroke="#3d3d3d" stroke-width="0.05">04:00</text>
<text x="743.5" y="271.2" font-size="6.5" text-anchor="middle" fill="#3d3d3d" font-weight="normal" textLength="15.2" lengthAdjust="spacingAndGlyphs" stroke="#3d3d3d" stroke-width="0.05">05/07</text>
<text x="743.5" y="280.1" font-size="6.5" text-anchor="middle" fill="#3d3d3d" font-weight="normal" textLength="13.6" lengthAdjust="spacingAndGlyphs" stroke="#3d3d3d" stroke-width="0.05">08:00</text>
<text x="776.4" y="271.2" font-size="6.5" text-anchor="middle" fill="#3d3d3d" font-weight="normal" textLength="15.2" lengthAdjust="spacingAndGlyphs" stroke="#3d3d3d" stroke-width="0.05">05/07</text>
<text x="776.4" y="280.1" font-size="6.5" text-anchor="middle" fill="#3d3d3d" font-weight="normal" textLength="13.6" lengthAdjust="spacingAndGlyphs" stroke="#3d3d3d" stroke-width="0.05">12:00</text>
<text x="809.2" y="271.2" font-size="6.5" text-anchor="middle" fill="#3d3d3d" font-weight="normal" textLength="15.2" lengthAdjust="spacingAndGlyphs" stroke="#3d3d3d" stroke-width="0.05">05/07</text>
<text x="809.2" y="280.1" font-size="6.5" text-anchor="middle" fill="#3d3d3d" font-weight="normal" textLength="13.6" lengthAdjust="spacingAndGlyphs" stroke="#3d3d3d" stroke-width="0.05">16:00</text>
<text x="842.1" y="271.2" font-size="6.5" text-anchor="middle" fill="#3d3d3d" font-weight="normal" textLength="15.2" lengthAdjust="spacingAndGlyphs" stroke="#3d3d3d" stroke-width="0.05">05/07</text>
<text x="842.1" y="280.1" font-size="6.5" text-anchor="middle" fill="#3d3d3d" font-weight="normal" textLength="13.6" lengthAdjust="spacingAndGlyphs" stroke="#3d3d3d" stroke-width="0.05">20:00</text>
<text x="874.9" y="271.2" font-size="6.5" text-anchor="middle" fill="#3d3d3d" font-weight="normal" textLength="15.2" lengthAdjust="spacingAndGlyphs" stroke="#3d3d3d" stroke-width="0.05">05/08</text>
<text x="874.9" y="280.1" font-size="6.5" text-anchor="middle" fill="#3d3d3d" font-weight="normal" textLength="13.6" lengthAdjust="spacingAndGlyphs" stroke="#3d3d3d" stroke-width="0.05">00:00</text>
<text x="907.8" y="271.2" font-size="6.5" text-anchor="middle" fill="#3d3d3d" font-weight="normal" textLength="15.2" lengthAdjust="spacingAndGlyphs" stroke="#3d3d3d" stroke-width="0.05">05/08</text>
<text x="907.8" y="280.1" font-size="6.5" text-anchor="middle" fill="#3d3d3d" font-weight="normal" textLength="13.6" lengthAdjust="spacingAndGlyphs" stroke="#3d3d3d" stroke-width="0.05">04:00</text>
<text x="940.6" y="271.2" font-size="6.5" text-anchor="middle" fill="#3d3d3d" font-weight="normal" textLength="15.2" lengthAdjust="spacingAndGlyphs" stroke="#3d3d3d" stroke-width="0.05">05/08</text>
<text x="940.6" y="280.1" font-size="6.5" text-anchor="middle" fill="#3d3d3d" font-weight="normal" textLength="13.6" lengthAdjust="spacingAndGlyphs" stroke="#3d3d3d" stroke-width="0.05">08:00</text>
<text x="973.5" y="271.2" font-size="6.5" text-anchor="middle" fill="#3d3d3d" font-weight="normal" textLength="15.2" lengthAdjust="spacingAndGlyphs" stroke="#3d3d3d" stroke-width="0.05">05/08</text>
<text x="973.5" y="280.1" font-size="6.5" text-anchor="middle" fill="#3d3d3d" font-weight="normal" textLength="13.6" lengthAdjust="spacingAndGlyphs" stroke="#3d3d3d" stroke-width="0.05">12:00</text>
<text x="780.6" y="166" font-size="6.3" text-anchor="middle" fill="#2a2d33" font-weight="bold" textLength="88.1" lengthAdjust="spacingAndGlyphs">Durchschnittliche Auslastung</text>
<text x="567.2" y="162.2" font-size="6.2" text-anchor="start" fill="#505050" font-weight="bold">i</text>
<rect x="572.9" y="288" width="6.2" height="1.9" fill="#7eb26d"/>
<text x="583.1" y="290.9" font-size="6.4" text-anchor="start" fill="#3d3d3d" font-weight="normal" textLength="51.6" lengthAdjust="spacingAndGlyphs" stroke="#3d3d3d" stroke-width="0.05">load:load:shortterm</text>
<rect x="640.1" y="288" width="6.2" height="1.9" fill="#eab839"/>
<text x="650.3" y="290.9" font-size="6.4" text-anchor="start" fill="#3d3d3d" font-weight="normal" textLength="47.2" lengthAdjust="spacingAndGlyphs" stroke="#3d3d3d" stroke-width="0.05">load:load:midterm</text>
<rect x="703" y="288" width="6.2" height="1.9" fill="#6ed0e0"/>
<text x="713.2" y="290.9" font-size="6.4" text-anchor="start" fill="#3d3d3d" font-weight="normal" textLength="48.8" lengthAdjust="spacingAndGlyphs" stroke="#3d3d3d" stroke-width="0.05">load:load:longterm</text>
<path d="M150.7 390.2 L151.7 390 L152.7 390.2 L153.7 390.4 L154.7 390.1 L155.7 390.1 L156.7 390.1 L157.7 390.2 L158.7 390 L159.7 390.4 L160 390.3 L160.7 390.4 L161.7 390.3 L162.7 389.8 L163.7 389.6 L164.7 389.5 L165.7 389.1 L166.7 389 L167.1 389 L167.7 389.2 L168.7 389.6 L169.7 389.5 L170.7 389.9 L171.7 390.2 L172 390.5 L172.7 390.6 L173.7 390.5 L174.7 390.8 L175.7 390.9 L176.7 390.8 L177.7 390.5 L178.7 390.6 L179.7 390.8 L180.7 390.6 L181.7 390.7 L182.7 390.8 L183.7 390.8 L184.7 390.4 L185.7 390.7 L186.7 390.8 L187.7 391.1 L188.7 391 L189.7 391.2 L190.7 391.2 L191.7 390.9 L192.7 390.9 L193.7 391 L194.7 391.2 L195.7 390.9 L196.7 391.1 L197.7 391.1 L198.7 391.1 L199.7 390.8 L200 391.2 L200.7 391.2 L201.7 391.4 L202.7 391.4 L203.7 391.4 L204.7 391.4 L205.7 391.4 L206.7 391 L207.7 391.1 L208.7 391.2 L209.7 391.4 L210.7 391 L211.7 391.2 L212.7 391.1 L213.7 391.1 L214.7 391 L215.7 391.4 L216.7 391.6 L217.7 391.4 L218.7 391.4 L219.7 391.3 L220.7 391.3 L221.7 391 L222.7 391.3 L223.7 391.3 L224.7 391.3 L225.7 391 L226.7 391.2 L227.7 391.2 L228.7 391.2 L229.7 391.3 L230 391.3 L230.7 391.6 L231.7 391.7 L232.7 391.3 L233.7 391.3 L234.7 391.2 L235.7 391.3 L236.7 391 L237.7 391.3 L238.7 391.2 L239.7 391.1 L240.7 390.8 L241.7 391.1 L242.7 391.2 L243.7 391.2 L244.7 391.4 L245.7 391.4 L246.7 391.4 L247.7 390.9 L248.7 391.1 L249.7 391.1 L250.7 391.1 L251.7 390.9 L252.7 391.1 L253.7 391 L254.7 390.8 L255.7 390.8 L256.7 391.1 L257.7 391.3 L258.7 391.1 L259.7 391.3 L260 391 L260.7 391.1 L261.7 390.9 L262.7 390.4 L263.7 390.6 L264.7 390.5 L265.7 390.4 L266.7 390.1 L267.7 390.1 L268.7 389.9 L269.7 389.7 L270.7 389.8 L271.7 390 L272.7 390 L273.7 389.6 L274.7 389.7 L275.7 389.4 L276.7 389.2 L277 389.2 L277.7 389.1 L278.7 389.5 L279.7 389.6 L280.7 389.6 L281.7 389.6 L282.7 389.8 L283 390 L283.7 389.6 L284.7 389 L285.7 389 L286.7 388.6 L287.3 388 L287.7 388.7 L288.7 389.2 L289.7 390.2 L290.7 391 L291.7 391.8 L291.8 392 L292.7 391.8 L293.7 391.9 L294.7 391.7 L295.7 391.2 L296.7 391.2 L297.7 391.2 L298.7 391.2 L299.7 391 L300 391 L300.7 391.2 L301.7 390.9 L302.7 390.6 L303.7 390.1 L304.7 390.1 L305.7 389.8 L306.7 389.6 L307.5 389.5 L307.7 389.5 L308.7 389.8 L309.7 389.8 L310.7 389.8 L311.7 390.3 L312.7 390.6 L313.7 390.9 L314.7 391 L315 391 L315.7 391.3 L316.7 391 L317.7 390.7 L318.7 390.5 L319.7 390.7 L320.7 390.5 L321.7 390.3 L322.7 390.3 L323.7 390.1 L324.7 390 L325.7 389.7 L326.7 390.1 L327.7 390.1 L328.7 390.1 L329.7 389.8 L330.7 389.9 L331.7 389.5 L332.7 389.3 L333.7 389.3 L334.7 389.4 L335.5 389.2 L335.7 389.3 L336.7 389.4 L337.7 389.9 L338.7 390.1 L339.7 390.4 L340.7 390.7 L341.7 391.5 L342.7 391.8 L343.7 392 L344.7 392.2 L345.7 392.5 L346.7 392.4 L347.7 392.3 L348.7 392.5 L349.7 392.5 L350.7 392.4 L351.7 392 L352.7 392.3 L353.7 392.2 L354.7 392.3 L355.7 392.4 L356.7 392.7 L357.7 392.5 L358.7 392.2 L359.7 392.2 L360.7 392.2 L361.7 392.1 L362.7 392 L363.7 392.3 L364.7 392.1 L365.7 391.9 L366.7 391.7 L367.7 392.1 L368.7 392 L369.7 392.1 L370 392 L370.7 392.2 L371.7 392.3 L372.7 392 L373.7 391.8 L374.7 391.9 L375.7 391.9 L376.7 391.9 L377.7 391.7 L378.7 392 L379.7 391.7 L380.7 391.3 L381.7 391.4 L382.7 392.2 L383.7 392.1 L384.3 391.8 L384.7 390.3 L385.7 386 L385.9 384.6 L386.7 384.4 L387.7 383.2 L388.3 383 L388.7 378.9 L389.7 370.4 L390.2 365.6 L390.7 365.3 L391.4 364.8 L391.7 373.4 L392.2 387.8 L392.7 381.9 L393.7 371.4 L394.3 364.8 L394.7 364.2 L395.7 364.3 L396.7 364.7 L397.7 365.2 L398.7 364.9 L399.7 364.6 L400 364.4 L400.7 364.9 L401.7 364.7 L402.7 364.7 L403.7 364.8 L404 365.2 L404.7 365.4 L405.7 364.7 L406.7 364.3 L407.7 363.8 L408.7 364 L408.9 364 L409.7 371.1 L410.5 379 L410.7 377.8 L411.7 372.9 L412.7 367.6 L412.8 366.4 L413.7 367.6 L414.7 368.2 L415.2 368.8 L415.7 368.2 L416.7 366.1 L417.6 364.8 L417.7 364.6 L418.7 364.6 L419.7 365.1 L420.7 364.3 L421.7 364.1 L422.7 364.1 L423.7 364.6 L424.7 364.5 L425 364.6 L425.7 364.7 L426.7 365.3 L427.7 364.7 L428.7 364 L429.7 363.3 L430.7 363.9 L431.7 363.1 L431.8 363.4 L432.7 363.9 L433.7 364.6 L434.7 365.6 L435.1 365.7 L435.7 364.9 L436.7 364.6 L437.7 365.1 L438.7 365.2 L439.7 365.1 L440.7 364.9 L441.7 365.3 L442.7 364.1 L443.7 363.7 L444.7 363.3 L445.2 363.6 L445.7 363.9 L446.7 363.1 L447.7 363 L448.7 362.9 L449.7 362.6 L450.7 361.9 L451.7 362 L452.7 362.8 L453.7 362.6 L454.5 362 L454.7 362.6 L455.7 362.9 L456.7 363.8 L457.7 363.3 L458.7 363.9 L459.7 364.6 L460.7 365.7 L461.7 365.6 L462 366 L462.7 365.6 L463.7 365.7 L464.7 365.4 L465.7 365.3 L466.7 365.6 L467.7 366.6 L468.7 366 L468.8 365.5 L469.7 365.1 L470.7 363.9 L471.7 363.4 L472.7 361.8 L473.7 361.3 L474.7 360.7 L475.7 361.6 L476.7 361.5 L477.7 362 L478.7 363.1 L479.7 363.5 L480.7 364.6 L481.7 365.6 L482.2 365.5 L482.7 366.5 L483.7 365.2 L484.7 364.8 L485.7 364.4 L486.7 364.4 L487.7 363.5 L488.7 363.6 L489 363.6 L489.7 364.2 L490.7 364.1 L491.7 364 L492.7 364.5 L493.7 365.8 L494 365.7 L494.7 364.4 L495.7 363.1 L496.7 361.3 L497.7 359.8 L498.7 356.8 L499 356.5 L499.7 358.1 L500.7 361 L501.7 363.9 L502.4 365.7 L502.7 364.3 L503.7 360.7 L504.7 357.3 L505 356 L505.7 356.3 L506.7 357.7 L507.7 359.4 L508.7 361.8 L509.7 362.7 L510.7 364.5 L510.8 364 L511.7 365.3 L512.7 366 L513.7 366 L514.2 367 L514.7 366.6 L515.7 366.9 L516.7 366.5 L517.7 366.1 L518.7 365.8 L519.7 365.9 L520.7 364.9 L521 365.7 L521.7 365.8 L522.7 366.9 L523.7 368.2 L524.7 368 L525.1 368 L525.7 368 L526.7 367.2 L527.7 366.3 L528.7 365.2 L529.7 365 L530.2 364.8 L530.7 355.4 L531.7 335.2 L531.9 331.5 L532.7 331 L533.6 331.2 L533.7 331 L534.7 335.1 L535.2 337 L535.7 337.4 L536.7 340.4 L537.7 343 L537.8 342.5 L538.7 342.1 L539.7 339.9 L540.3 339 L540.3 399.9 L150.7 399.9 Z" fill="#ef843c" fill-opacity="0.2"/>
<line x1="150.7" y1="325.2" x2="540.3" y2="325.2" stroke="#000" stroke-opacity="0.075" stroke-width="0.7"/>
<line x1="150.7" y1="340.1" x2="540.3" y2="340.1" stroke="#000" stroke-opacity="0.075" stroke-width="0.7"/>
<line x1="150.7" y1="355.1" x2="540.3" y2="355.1" stroke="#000" stroke-opacity="0.075" stroke-width="0.7"/>
<line x1="150.7" y1="370" x2="540.3" y2="370" stroke="#000" stroke-opacity="0.075" stroke-width="0.7"/>
<line x1="150.7" y1="385" x2="540.3" y2="385" stroke="#000" stroke-opacity="0.075" stroke-width="0.7"/>
<line x1="150.7" y1="399.9" x2="540.3" y2="399.9" stroke="#000" stroke-opacity="0.075" stroke-width="0.7"/>
<line x1="177.9" y1="325.2" x2="177.9" y2="399.9" stroke="#000" stroke-opacity="0.075" stroke-width="0.7"/>
<line x1="210.4" y1="325.2" x2="210.4" y2="399.9" stroke="#000" stroke-opacity="0.075" stroke-width="0.7"/>
<line x1="243" y1="325.2" x2="243" y2="399.9" stroke="#000" stroke-opacity="0.075" stroke-width="0.7"/>
<line x1="275.5" y1="325.2" x2="275.5" y2="399.9" stroke="#000" stroke-opacity="0.075" stroke-width="0.7"/>
<line x1="308" y1="325.2" x2="308" y2="399.9" stroke="#000" stroke-opacity="0.075" stroke-width="0.7"/>
<line x1="340.6" y1="325.2" x2="340.6" y2="399.9" stroke="#000" stroke-opacity="0.075" stroke-width="0.7"/>
<line x1="373.1" y1="325.2" x2="373.1" y2="399.9" stroke="#000" stroke-opacity="0.075" stroke-width="0.7"/>
<line x1="405.6" y1="325.2" x2="405.6" y2="399.9" stroke="#000" stroke-opacity="0.075" stroke-width="0.7"/>
<line x1="438.1" y1="325.2" x2="438.1" y2="399.9" stroke="#000" stroke-opacity="0.075" stroke-width="0.7"/>
<line x1="470.7" y1="325.2" x2="470.7" y2="399.9" stroke="#000" stroke-opacity="0.075" stroke-width="0.7"/>
<line x1="503.2" y1="325.2" x2="503.2" y2="399.9" stroke="#000" stroke-opacity="0.075" stroke-width="0.7"/>
<line x1="535.7" y1="325.2" x2="535.7" y2="399.9" stroke="#000" stroke-opacity="0.075" stroke-width="0.7"/>
<path d="M150.7 390.2 L151.7 390 L152.7 390.2 L153.7 390.4 L154.7 390.1 L155.7 390.1 L156.7 390.1 L157.7 390.2 L158.7 390 L159.7 390.4 L160 390.3 L160.7 390.4 L161.7 390.3 L162.7 389.8 L163.7 389.6 L164.7 389.5 L165.7 389.1 L166.7 389 L167.1 389 L167.7 389.2 L168.7 389.6 L169.7 389.5 L170.7 389.9 L171.7 390.2 L172 390.5 L172.7 390.6 L173.7 390.5 L174.7 390.8 L175.7 390.9 L176.7 390.8 L177.7 390.5 L178.7 390.6 L179.7 390.8 L180.7 390.6 L181.7 390.7 L182.7 390.8 L183.7 390.8 L184.7 390.4 L185.7 390.7 L186.7 390.8 L187.7 391.1 L188.7 391 L189.7 391.2 L190.7 391.2 L191.7 390.9 L192.7 390.9 L193.7 391 L194.7 391.2 L195.7 390.9 L196.7 391.1 L197.7 391.1 L198.7 391.1 L199.7 390.8 L200 391.2 L200.7 391.2 L201.7 391.4 L202.7 391.4 L203.7 391.4 L204.7 391.4 L205.7 391.4 L206.7 391 L207.7 391.1 L208.7 391.2 L209.7 391.4 L210.7 391 L211.7 391.2 L212.7 391.1 L213.7 391.1 L214.7 391 L215.7 391.4 L216.7 391.6 L217.7 391.4 L218.7 391.4 L219.7 391.3 L220.7 391.3 L221.7 391 L222.7 391.3 L223.7 391.3 L224.7 391.3 L225.7 391 L226.7 391.2 L227.7 391.2 L228.7 391.2 L229.7 391.3 L230 391.3 L230.7 391.6 L231.7 391.7 L232.7 391.3 L233.7 391.3 L234.7 391.2 L235.7 391.3 L236.7 391 L237.7 391.3 L238.7 391.2 L239.7 391.1 L240.7 390.8 L241.7 391.1 L242.7 391.2 L243.7 391.2 L244.7 391.4 L245.7 391.4 L246.7 391.4 L247.7 390.9 L248.7 391.1 L249.7 391.1 L250.7 391.1 L251.7 390.9 L252.7 391.1 L253.7 391 L254.7 390.8 L255.7 390.8 L256.7 391.1 L257.7 391.3 L258.7 391.1 L259.7 391.3 L260 391 L260.7 391.1 L261.7 390.9 L262.7 390.4 L263.7 390.6 L264.7 390.5 L265.7 390.4 L266.7 390.1 L267.7 390.1 L268.7 389.9 L269.7 389.7 L270.7 389.8 L271.7 390 L272.7 390 L273.7 389.6 L274.7 389.7 L275.7 389.4 L276.7 389.2 L277 389.2 L277.7 389.1 L278.7 389.5 L279.7 389.6 L280.7 389.6 L281.7 389.6 L282.7 389.8 L283 390 L283.7 389.6 L284.7 389 L285.7 389 L286.7 388.6 L287.3 388 L287.7 388.7 L288.7 389.2 L289.7 390.2 L290.7 391 L291.7 391.8 L291.8 392 L292.7 391.8 L293.7 391.9 L294.7 391.7 L295.7 391.2 L296.7 391.2 L297.7 391.2 L298.7 391.2 L299.7 391 L300 391 L300.7 391.2 L301.7 390.9 L302.7 390.6 L303.7 390.1 L304.7 390.1 L305.7 389.8 L306.7 389.6 L307.5 389.5 L307.7 389.5 L308.7 389.8 L309.7 389.8 L310.7 389.8 L311.7 390.3 L312.7 390.6 L313.7 390.9 L314.7 391 L315 391 L315.7 391.3 L316.7 391 L317.7 390.7 L318.7 390.5 L319.7 390.7 L320.7 390.5 L321.7 390.3 L322.7 390.3 L323.7 390.1 L324.7 390 L325.7 389.7 L326.7 390.1 L327.7 390.1 L328.7 390.1 L329.7 389.8 L330.7 389.9 L331.7 389.5 L332.7 389.3 L333.7 389.3 L334.7 389.4 L335.5 389.2 L335.7 389.3 L336.7 389.4 L337.7 389.9 L338.7 390.1 L339.7 390.4 L340.7 390.7 L341.7 391.5 L342.7 391.8 L343.7 392 L344.7 392.2 L345.7 392.5 L346.7 392.4 L347.7 392.3 L348.7 392.5 L349.7 392.5 L350.7 392.4 L351.7 392 L352.7 392.3 L353.7 392.2 L354.7 392.3 L355.7 392.4 L356.7 392.7 L357.7 392.5 L358.7 392.2 L359.7 392.2 L360.7 392.2 L361.7 392.1 L362.7 392 L363.7 392.3 L364.7 392.1 L365.7 391.9 L366.7 391.7 L367.7 392.1 L368.7 392 L369.7 392.1 L370 392 L370.7 392.2 L371.7 392.3 L372.7 392 L373.7 391.8 L374.7 391.9 L375.7 391.9 L376.7 391.9 L377.7 391.7 L378.7 392 L379.7 391.7 L380.7 391.3 L381.7 391.4 L382.7 392.2 L383.7 392.1 L384.3 391.8 L384.7 390.3 L385.7 386 L385.9 384.6 L386.7 384.4 L387.7 383.2 L388.3 383 L388.7 378.9 L389.7 370.4 L390.2 365.6 L390.7 365.3 L391.4 364.8 L391.7 373.4 L392.2 387.8 L392.7 381.9 L393.7 371.4 L394.3 364.8 L394.7 364.2 L395.7 364.3 L396.7 364.7 L397.7 365.2 L398.7 364.9 L399.7 364.6 L400 364.4 L400.7 364.9 L401.7 364.7 L402.7 364.7 L403.7 364.8 L404 365.2 L404.7 365.4 L405.7 364.7 L406.7 364.3 L407.7 363.8 L408.7 364 L408.9 364 L409.7 371.1 L410.5 379 L410.7 377.8 L411.7 372.9 L412.7 367.6 L412.8 366.4 L413.7 367.6 L414.7 368.2 L415.2 368.8 L415.7 368.2 L416.7 366.1 L417.6 364.8 L417.7 364.6 L418.7 364.6 L419.7 365.1 L420.7 364.3 L421.7 364.1 L422.7 364.1 L423.7 364.6 L424.7 364.5 L425 364.6 L425.7 364.7 L426.7 365.3 L427.7 364.7 L428.7 364 L429.7 363.3 L430.7 363.9 L431.7 363.1 L431.8 363.4 L432.7 363.9 L433.7 364.6 L434.7 365.6 L435.1 365.7 L435.7 364.9 L436.7 364.6 L437.7 365.1 L438.7 365.2 L439.7 365.1 L440.7 364.9 L441.7 365.3 L442.7 364.1 L443.7 363.7 L444.7 363.3 L445.2 363.6 L445.7 363.9 L446.7 363.1 L447.7 363 L448.7 362.9 L449.7 362.6 L450.7 361.9 L451.7 362 L452.7 362.8 L453.7 362.6 L454.5 362 L454.7 362.6 L455.7 362.9 L456.7 363.8 L457.7 363.3 L458.7 363.9 L459.7 364.6 L460.7 365.7 L461.7 365.6 L462 366 L462.7 365.6 L463.7 365.7 L464.7 365.4 L465.7 365.3 L466.7 365.6 L467.7 366.6 L468.7 366 L468.8 365.5 L469.7 365.1 L470.7 363.9 L471.7 363.4 L472.7 361.8 L473.7 361.3 L474.7 360.7 L475.7 361.6 L476.7 361.5 L477.7 362 L478.7 363.1 L479.7 363.5 L480.7 364.6 L481.7 365.6 L482.2 365.5 L482.7 366.5 L483.7 365.2 L484.7 364.8 L485.7 364.4 L486.7 364.4 L487.7 363.5 L488.7 363.6 L489 363.6 L489.7 364.2 L490.7 364.1 L491.7 364 L492.7 364.5 L493.7 365.8 L494 365.7 L494.7 364.4 L495.7 363.1 L496.7 361.3 L497.7 359.8 L498.7 356.8 L499 356.5 L499.7 358.1 L500.7 361 L501.7 363.9 L502.4 365.7 L502.7 364.3 L503.7 360.7 L504.7 357.3 L505 356 L505.7 356.3 L506.7 357.7 L507.7 359.4 L508.7 361.8 L509.7 362.7 L510.7 364.5 L510.8 364 L511.7 365.3 L512.7 366 L513.7 366 L514.2 367 L514.7 366.6 L515.7 366.9 L516.7 366.5 L517.7 366.1 L518.7 365.8 L519.7 365.9 L520.7 364.9 L521 365.7 L521.7 365.8 L522.7 366.9 L523.7 368.2 L524.7 368 L525.1 368 L525.7 368 L526.7 367.2 L527.7 366.3 L528.7 365.2 L529.7 365 L530.2 364.8 L530.7 355.4 L531.7 335.2 L531.9 331.5 L532.7 331 L533.6 331.2 L533.7 331 L534.7 335.1 L535.2 337 L535.7 337.4 L536.7 340.4 L537.7 343 L537.8 342.5 L538.7 342.1 L539.7 339.9 L540.3 339" fill="none" stroke="#f19c66" stroke-width="0.9"/>
<line x1="150.7" y1="399.9" x2="540.3" y2="399.9" stroke="#6f89a6" stroke-width="0.8"/>
<path d="M408.7 399.9 L410.2 397.6 L411.7 399.9 Z" fill="#4a78b8"/><path d="M329.8 399.9 L331 398.2 L332.2 399.9 Z" fill="#4a78b8"/>
<text x="147.8" y="327.3" font-size="6.3" text-anchor="end" fill="#474747" font-weight="normal" textLength="16" lengthAdjust="spacingAndGlyphs">1.25 K</text>
<text x="147.8" y="342.2" font-size="6.3" text-anchor="end" fill="#474747" font-weight="normal" textLength="9.5" lengthAdjust="spacingAndGlyphs">1 K</text>
<text x="147.8" y="357.2" font-size="6.3" text-anchor="end" fill="#474747" font-weight="normal" textLength="10.4" lengthAdjust="spacingAndGlyphs">750</text>
<text x="147.8" y="372.1" font-size="6.3" text-anchor="end" fill="#474747" font-weight="normal" textLength="10.4" lengthAdjust="spacingAndGlyphs">500</text>
<text x="147.8" y="387.1" font-size="6.3" text-anchor="end" fill="#474747" font-weight="normal" textLength="10.4" lengthAdjust="spacingAndGlyphs">250</text>
<text x="147.8" y="402" font-size="6.3" text-anchor="end" fill="#474747" font-weight="normal" textLength="3.5" lengthAdjust="spacingAndGlyphs">0</text>
<text x="177.9" y="408.3" font-size="6.5" text-anchor="middle" fill="#3d3d3d" font-weight="normal" textLength="15.2" lengthAdjust="spacingAndGlyphs" stroke="#3d3d3d" stroke-width="0.05">05/06</text>
<text x="177.9" y="416.5" font-size="6.5" text-anchor="middle" fill="#3d3d3d" font-weight="normal" textLength="13.6" lengthAdjust="spacingAndGlyphs" stroke="#3d3d3d" stroke-width="0.05">16:00</text>
<text x="210.4" y="408.3" font-size="6.5" text-anchor="middle" fill="#3d3d3d" font-weight="normal" textLength="15.2" lengthAdjust="spacingAndGlyphs" stroke="#3d3d3d" stroke-width="0.05">05/06</text>
<text x="210.4" y="416.5" font-size="6.5" text-anchor="middle" fill="#3d3d3d" font-weight="normal" textLength="13.6" lengthAdjust="spacingAndGlyphs" stroke="#3d3d3d" stroke-width="0.05">20:00</text>
<text x="243" y="408.3" font-size="6.5" text-anchor="middle" fill="#3d3d3d" font-weight="normal" textLength="15.2" lengthAdjust="spacingAndGlyphs" stroke="#3d3d3d" stroke-width="0.05">05/07</text>
<text x="243" y="416.5" font-size="6.5" text-anchor="middle" fill="#3d3d3d" font-weight="normal" textLength="13.6" lengthAdjust="spacingAndGlyphs" stroke="#3d3d3d" stroke-width="0.05">00:00</text>
<text x="275.5" y="408.3" font-size="6.5" text-anchor="middle" fill="#3d3d3d" font-weight="normal" textLength="15.2" lengthAdjust="spacingAndGlyphs" stroke="#3d3d3d" stroke-width="0.05">05/07</text>
<text x="275.5" y="416.5" font-size="6.5" text-anchor="middle" fill="#3d3d3d" font-weight="normal" textLength="13.6" lengthAdjust="spacingAndGlyphs" stroke="#3d3d3d" stroke-width="0.05">04:00</text>
<text x="308" y="408.3" font-size="6.5" text-anchor="middle" fill="#3d3d3d" font-weight="normal" textLength="15.2" lengthAdjust="spacingAndGlyphs" stroke="#3d3d3d" stroke-width="0.05">05/07</text>
<text x="308" y="416.5" font-size="6.5" text-anchor="middle" fill="#3d3d3d" font-weight="normal" textLength="13.6" lengthAdjust="spacingAndGlyphs" stroke="#3d3d3d" stroke-width="0.05">08:00</text>
<text x="340.6" y="408.3" font-size="6.5" text-anchor="middle" fill="#3d3d3d" font-weight="normal" textLength="15.2" lengthAdjust="spacingAndGlyphs" stroke="#3d3d3d" stroke-width="0.05">05/07</text>
<text x="340.6" y="416.5" font-size="6.5" text-anchor="middle" fill="#3d3d3d" font-weight="normal" textLength="13.6" lengthAdjust="spacingAndGlyphs" stroke="#3d3d3d" stroke-width="0.05">12:00</text>
<text x="373.1" y="408.3" font-size="6.5" text-anchor="middle" fill="#3d3d3d" font-weight="normal" textLength="15.2" lengthAdjust="spacingAndGlyphs" stroke="#3d3d3d" stroke-width="0.05">05/07</text>
<text x="373.1" y="416.5" font-size="6.5" text-anchor="middle" fill="#3d3d3d" font-weight="normal" textLength="13.6" lengthAdjust="spacingAndGlyphs" stroke="#3d3d3d" stroke-width="0.05">16:00</text>
<text x="405.6" y="408.3" font-size="6.5" text-anchor="middle" fill="#3d3d3d" font-weight="normal" textLength="15.2" lengthAdjust="spacingAndGlyphs" stroke="#3d3d3d" stroke-width="0.05">05/07</text>
<text x="405.6" y="416.5" font-size="6.5" text-anchor="middle" fill="#3d3d3d" font-weight="normal" textLength="13.6" lengthAdjust="spacingAndGlyphs" stroke="#3d3d3d" stroke-width="0.05">20:00</text>
<text x="438.1" y="408.3" font-size="6.5" text-anchor="middle" fill="#3d3d3d" font-weight="normal" textLength="15.2" lengthAdjust="spacingAndGlyphs" stroke="#3d3d3d" stroke-width="0.05">05/08</text>
<text x="438.1" y="416.5" font-size="6.5" text-anchor="middle" fill="#3d3d3d" font-weight="normal" textLength="13.6" lengthAdjust="spacingAndGlyphs" stroke="#3d3d3d" stroke-width="0.05">00:00</text>
<text x="470.7" y="408.3" font-size="6.5" text-anchor="middle" fill="#3d3d3d" font-weight="normal" textLength="15.2" lengthAdjust="spacingAndGlyphs" stroke="#3d3d3d" stroke-width="0.05">05/08</text>
<text x="470.7" y="416.5" font-size="6.5" text-anchor="middle" fill="#3d3d3d" font-weight="normal" textLength="13.6" lengthAdjust="spacingAndGlyphs" stroke="#3d3d3d" stroke-width="0.05">04:00</text>
<text x="503.2" y="408.3" font-size="6.5" text-anchor="middle" fill="#3d3d3d" font-weight="normal" textLength="15.2" lengthAdjust="spacingAndGlyphs" stroke="#3d3d3d" stroke-width="0.05">05/08</text>
<text x="503.2" y="416.5" font-size="6.5" text-anchor="middle" fill="#3d3d3d" font-weight="normal" textLength="13.6" lengthAdjust="spacingAndGlyphs" stroke="#3d3d3d" stroke-width="0.05">08:00</text>
<text x="535.7" y="408.3" font-size="6.5" text-anchor="middle" fill="#3d3d3d" font-weight="normal" textLength="15.2" lengthAdjust="spacingAndGlyphs" stroke="#3d3d3d" stroke-width="0.05">05/08</text>
<text x="535.7" y="416.5" font-size="6.5" text-anchor="middle" fill="#3d3d3d" font-weight="normal" textLength="13.6" lengthAdjust="spacingAndGlyphs" stroke="#3d3d3d" stroke-width="0.05">12:00</text>
<text x="343.4" y="312.1" font-size="6.3" text-anchor="middle" fill="#2a2d33" font-weight="bold" textLength="27.8" lengthAdjust="spacingAndGlyphs">Prozesse</text>
<text x="130.1" y="308.2" font-size="6.2" text-anchor="start" fill="#505050" font-weight="bold">i</text>
<rect x="136" y="425.2" width="6.2" height="1.9" fill="#7eb26d"/>
<text x="146.2" y="428.1" font-size="6.4" text-anchor="start" fill="#3d3d3d" font-weight="normal" textLength="87.7" lengthAdjust="spacingAndGlyphs" stroke="#3d3d3d" stroke-width="0.05">processes:ps_state-running:value</text>
<rect x="239.6" y="425.2" width="6.2" height="1.9" fill="#eab839"/>
<text x="249.8" y="428.1" font-size="6.4" text-anchor="start" fill="#3d3d3d" font-weight="normal" textLength="88.1" lengthAdjust="spacingAndGlyphs" stroke="#3d3d3d" stroke-width="0.05">processes:ps_state-blocked:value</text>
<rect x="342.6" y="425.2" width="6.2" height="1.9" fill="#6ed0e0"/>
<text x="352.8" y="428.1" font-size="6.4" text-anchor="start" fill="#3d3d3d" font-weight="normal" textLength="85.5" lengthAdjust="spacingAndGlyphs" stroke="#3d3d3d" stroke-width="0.05">processes:ps_state-paging:value</text>
<rect x="443.6" y="425.2" width="6.2" height="1.9" fill="#ef843c"/>
<text x="453.8" y="428.1" font-size="6.4" text-anchor="start" fill="#3d3d3d" font-weight="normal" textLength="89.7" lengthAdjust="spacingAndGlyphs" stroke="#3d3d3d" stroke-width="0.05">processes:ps_state-sleeping:value</text>
<rect x="136" y="433.3" width="6.2" height="1.9" fill="#e24d42"/>
<text x="146.2" y="436.2" font-size="6.4" text-anchor="start" fill="#3d3d3d" font-weight="normal" textLength="89.2" lengthAdjust="spacingAndGlyphs" stroke="#3d3d3d" stroke-width="0.05">processes:ps_state-stopped:value</text>
<rect x="240.6" y="433.3" width="6.2" height="1.9" fill="#1f78c1"/>
<text x="250.8" y="436.2" font-size="6.4" text-anchor="start" fill="#3d3d3d" font-weight="normal" textLength="89.8" lengthAdjust="spacingAndGlyphs" stroke="#3d3d3d" stroke-width="0.05">processes:ps_state-zombies:value</text>
<rect x="365.3" y="352.9" width="58.9" height="69" rx="2.2" fill="#ff0000" fill-opacity="0.1" stroke="#d8262c" stroke-width="1.6"/>
</svg><!--/CHARTS-->
<!-- footer -->
<div class="a" style="left:108px;top:486.8px;width:908px;height:18.2px;background:#f2f2f2;border-top:1px solid #e4e4e4"></div>
<div class="a" style="left:551px;top:493px;width:0.8px;height:7px;background:#e0e0e0"></div>
<div class="a" style="left:555.6px;top:492.6px;font-size:6.4px;line-height:7px;color:#2a93c9;letter-spacing:-0.4px">Cookies</div>
<div class="a" style="left:811.2px;top:494.3px;width:71.3px;height:12px;background:#fbfbfb;border:1px solid #e2e2e2;border-radius:1.5px"></div>
<div class="a" style="left:814.2px;top:495.1px;font-size:7px;line-height:8px;color:#4a4a4a;letter-spacing:-0.43px">Adobe Photoshop 2023</div>
<div class="a" style="left:882.9px;top:498.2px;width:1.1px;height:7px;background:#444"></div>
<div id="scr">
  <div class="a" style="left:1.5px;top:2.5px;width:0;height:0;border-left:2.7px solid transparent;border-right:2.7px solid transparent;border-bottom:3.6px solid #5a5a5a"></div>
  <div class="a" style="left:1.4px;top:499.2px;width:0;height:0;border-left:2.8px solid transparent;border-right:2.8px solid transparent;border-top:3.8px solid #5e5e5e"></div>
</div>

</body></html>
